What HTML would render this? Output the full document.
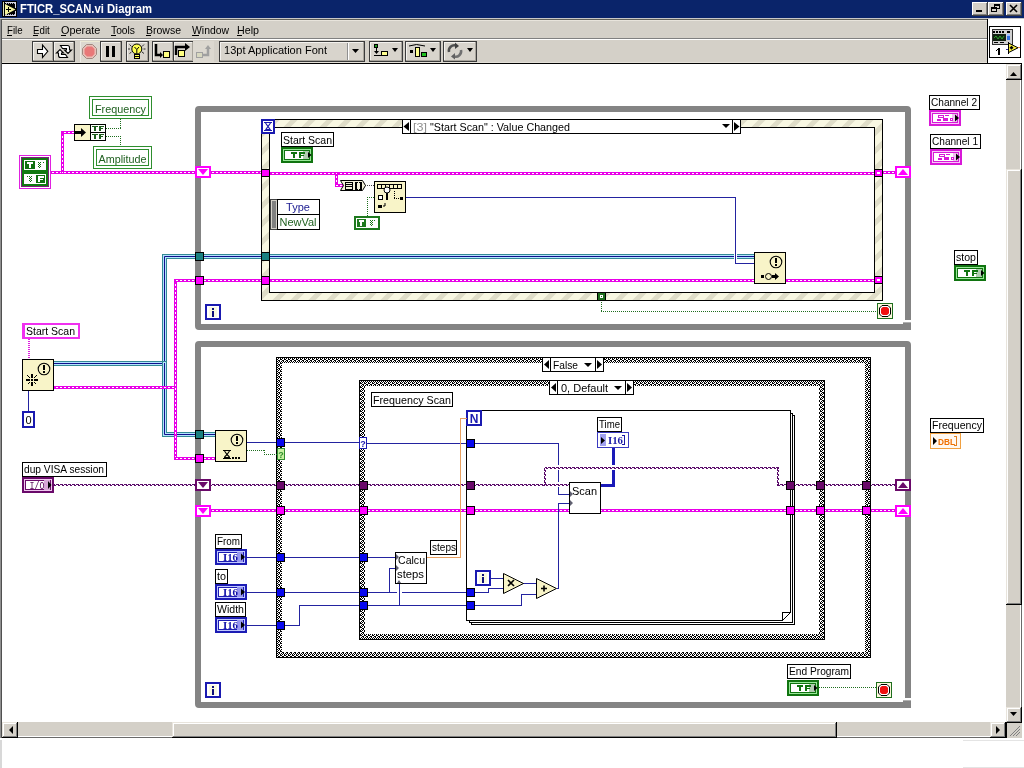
<!DOCTYPE html>
<html><head><meta charset="utf-8"><title>FTICR_SCAN.vi Diagram</title>
<style>html,body{margin:0;padding:0;background:#fff;overflow:hidden}svg{display:block;will-change:transform}rect{shape-rendering:crispEdges}text{white-space:pre}</style>
</head><body>
<svg width="1024" height="768" viewBox="0 0 1024 768" font-family="Liberation Sans, sans-serif">
<defs>
<pattern id="dashH" patternUnits="userSpaceOnUse" width="4" height="1"><rect x="0" y="0" width="2" height="1" fill="#fff"/><rect x="2" y="0" width="2" height="1" fill="#e800e8"/></pattern>
<pattern id="dashV" patternUnits="userSpaceOnUse" width="1" height="4"><rect x="0" y="0" width="1" height="2" fill="#fff"/><rect x="0" y="2" width="1" height="2" fill="#e800e8"/></pattern>
<pattern id="waveHt" patternUnits="userSpaceOnUse" width="4" height="1"><rect x="0" y="0" width="3" height="1" fill="#5a0a6a"/></pattern>
<pattern id="waveHb" patternUnits="userSpaceOnUse" width="4" height="1"><rect x="2" y="0" width="2" height="1" fill="#5a0a6a"/></pattern>
<pattern id="waveVt" patternUnits="userSpaceOnUse" width="1" height="4"><rect x="0" y="0" width="1" height="3" fill="#5a0a6a"/></pattern>
<pattern id="waveVb" patternUnits="userSpaceOnUse" width="1" height="4"><rect x="0" y="2" width="1" height="2" fill="#5a0a6a"/></pattern>
<pattern id="ckg" patternUnits="userSpaceOnUse" x="0" y="2" width="4" height="4"><rect width="4" height="4" fill="#fff"/><rect x="0" y="0" width="1" height="1" fill="#000"/><rect x="2" y="0" width="1" height="1" fill="#000"/><rect x="0" y="1" width="1" height="1" fill="#000"/><rect x="1" y="1" width="1" height="1" fill="#000"/><rect x="2" y="2" width="1" height="1" fill="#000"/><rect x="3" y="2" width="1" height="1" fill="#000"/><rect x="1" y="3" width="1" height="1" fill="#000"/><rect x="3" y="3" width="1" height="1" fill="#000"/></pattern>
<pattern id="stripes" patternUnits="userSpaceOnUse" width="18" height="18"><rect width="18" height="18" fill="#f8f7e2"/><path d="M-4.5 22.5 L22.5 -4.5 M-13.5 13.5 L13.5 -13.5 M4.5 31.5 L31.5 4.5" stroke="#dfddc8" stroke-width="5"/></pattern>
</defs>
<rect x="0" y="0" width="1024" height="768" fill="#ffffff" /><rect x="0" y="18" width="1024" height="46" fill="#d4d0c8" /><rect x="0" y="0" width="1024" height="18" fill="#0a246a" /><rect x="2" y="1" width="15" height="16" fill="#000" /><rect x="3" y="2" width="1" height="14" fill="#d8e0c0" /><rect x="5" y="2" width="11" height="1" fill="#d8d8e8" /><rect x="15" y="2" width="1" height="6" fill="#d8d8e8" /><rect x="15" y="11" width="1" height="5" fill="#d8d8e8" /><rect x="5" y="15" width="11" height="1" fill="#d8d8e8" /><rect x="6" y="3" width="1" height="1" fill="#b0b0c0" /><rect x="6" y="14" width="1" height="1" fill="#b0b0c0" /><rect x="8" y="3" width="1" height="1" fill="#b0b0c0" /><rect x="8" y="14" width="1" height="1" fill="#b0b0c0" /><rect x="10" y="3" width="1" height="1" fill="#b0b0c0" /><rect x="10" y="14" width="1" height="1" fill="#b0b0c0" /><rect x="12" y="3" width="1" height="1" fill="#b0b0c0" /><rect x="12" y="14" width="1" height="1" fill="#b0b0c0" /><rect x="14" y="3" width="1" height="1" fill="#b0b0c0" /><rect x="14" y="14" width="1" height="1" fill="#b0b0c0" /><path d="M5 4 L15.5 9.5 L5 15 Z" fill="#f4f4a0"/><rect x="6" y="9" width="5" height="1" fill="#000" /><rect x="8" y="7" width="1" height="5" fill="#000" /><text x="20" y="13" font-family="Liberation Sans" font-size="12" fill="#fff" font-weight="bold" text-anchor="start" textLength="132" lengthAdjust="spacingAndGlyphs" >FTICR_SCAN.vi Diagram</text><rect x="972" y="2" width="16" height="14" fill="#d4d0c8" /><rect x="972" y="2" width="15" height="1" fill="#fff" /><rect x="972" y="2" width="1" height="13" fill="#fff" /><rect x="972" y="15" width="16" height="1" fill="#404040" /><rect x="987" y="2" width="1" height="14" fill="#404040" /><rect x="973" y="14" width="14" height="1" fill="#808080" /><rect x="986" y="3" width="1" height="12" fill="#808080" /><rect x="976" y="10" width="6" height="2" fill="#000" /><rect x="988" y="2" width="16" height="14" fill="#d4d0c8" /><rect x="988" y="2" width="15" height="1" fill="#fff" /><rect x="988" y="2" width="1" height="13" fill="#fff" /><rect x="988" y="15" width="16" height="1" fill="#404040" /><rect x="1003" y="2" width="1" height="14" fill="#404040" /><rect x="989" y="14" width="14" height="1" fill="#808080" /><rect x="1002" y="3" width="1" height="12" fill="#808080" /><rect x="994" y="4" width="6" height="1" fill="#000" /><rect x="994" y="8" width="6" height="1" fill="#000" /><rect x="994" y="4" width="1" height="5" fill="#000" /><rect x="999" y="4" width="1" height="5" fill="#000" /><rect x="994" y="5" width="6" height="1" fill="#000" /><rect x="991" y="7" width="6" height="5" fill="#d4d0c8" /><rect x="991" y="7" width="6" height="1" fill="#000" /><rect x="991" y="11" width="6" height="1" fill="#000" /><rect x="991" y="7" width="1" height="5" fill="#000" /><rect x="996" y="7" width="1" height="5" fill="#000" /><rect x="991" y="8" width="6" height="1" fill="#000" /><rect x="1006" y="2" width="16" height="14" fill="#d4d0c8" /><rect x="1006" y="2" width="15" height="1" fill="#fff" /><rect x="1006" y="2" width="1" height="13" fill="#fff" /><rect x="1006" y="15" width="16" height="1" fill="#404040" /><rect x="1021" y="2" width="1" height="14" fill="#404040" /><rect x="1007" y="14" width="14" height="1" fill="#808080" /><rect x="1020" y="3" width="1" height="12" fill="#808080" /><path d="M1010 5 L1017 12 M1017 5 L1010 12" stroke="#000" stroke-width="1.6"/><rect x="0" y="18" width="1" height="722" fill="#909090" /><rect x="1" y="19" width="1" height="719" fill="#505050" /><rect x="0" y="18" width="1024" height="1" fill="#c8c8c8" /><rect x="1" y="19" width="1023" height="1" fill="#606058" /><rect x="2" y="20" width="985" height="1" fill="#e8e4dc" /><text x="7" y="34" font-family="Liberation Sans" font-size="11" fill="#000" font-weight="normal" text-anchor="start" textLength="15.6" lengthAdjust="spacingAndGlyphs" >File</text><rect x="7" y="35" width="5" height="1" fill="#000" /><text x="33" y="34" font-family="Liberation Sans" font-size="11" fill="#000" font-weight="normal" text-anchor="start" textLength="16.8" lengthAdjust="spacingAndGlyphs" >Edit</text><rect x="33" y="35" width="5" height="1" fill="#000" /><text x="61" y="34" font-family="Liberation Sans" font-size="11" fill="#000" font-weight="normal" text-anchor="start" textLength="39.4" lengthAdjust="spacingAndGlyphs" >Operate</text><rect x="61" y="35" width="5" height="1" fill="#000" /><text x="111" y="34" font-family="Liberation Sans" font-size="11" fill="#000" font-weight="normal" text-anchor="start" textLength="24" lengthAdjust="spacingAndGlyphs" >Tools</text><rect x="111" y="35" width="5" height="1" fill="#000" /><text x="146" y="34" font-family="Liberation Sans" font-size="11" fill="#000" font-weight="normal" text-anchor="start" textLength="35" lengthAdjust="spacingAndGlyphs" >Browse</text><rect x="146" y="35" width="5" height="1" fill="#000" /><text x="192" y="34" font-family="Liberation Sans" font-size="11" fill="#000" font-weight="normal" text-anchor="start" textLength="37" lengthAdjust="spacingAndGlyphs" >Window</text><rect x="192" y="35" width="7" height="1" fill="#000" /><text x="237" y="34" font-family="Liberation Sans" font-size="11" fill="#000" font-weight="normal" text-anchor="start" textLength="22" lengthAdjust="spacingAndGlyphs" >Help</text><rect x="237" y="35" width="5" height="1" fill="#000" /><rect x="2" y="38" width="985" height="1" fill="#808080" /><rect x="2" y="39" width="985" height="1" fill="#fff" /><rect x="32" y="41" width="22" height="21" fill="#d8d4cc" /><rect x="32" y="41" width="22" height="1" fill="#3c3c3c" /><rect x="32" y="61" width="22" height="1" fill="#3c3c3c" /><rect x="32" y="41" width="1" height="21" fill="#3c3c3c" /><rect x="53" y="41" width="1" height="21" fill="#3c3c3c" /><rect x="33" y="42" width="20" height="1" fill="#f4f2ee" /><rect x="33" y="42" width="1" height="19" fill="#f4f2ee" /><rect x="33" y="60" width="20" height="1" fill="#a8a49c" /><rect x="52" y="42" width="1" height="19" fill="#a8a49c" /><rect x="53" y="41" width="22" height="21" fill="#d8d4cc" /><rect x="53" y="41" width="22" height="1" fill="#3c3c3c" /><rect x="53" y="61" width="22" height="1" fill="#3c3c3c" /><rect x="53" y="41" width="1" height="21" fill="#3c3c3c" /><rect x="74" y="41" width="1" height="21" fill="#3c3c3c" /><rect x="54" y="42" width="20" height="1" fill="#f4f2ee" /><rect x="54" y="42" width="1" height="19" fill="#f4f2ee" /><rect x="54" y="60" width="20" height="1" fill="#a8a49c" /><rect x="73" y="42" width="1" height="19" fill="#a8a49c" /><rect x="100" y="41" width="22" height="21" fill="#d8d4cc" /><rect x="100" y="41" width="22" height="1" fill="#3c3c3c" /><rect x="100" y="61" width="22" height="1" fill="#3c3c3c" /><rect x="100" y="41" width="1" height="21" fill="#3c3c3c" /><rect x="121" y="41" width="1" height="21" fill="#3c3c3c" /><rect x="101" y="42" width="20" height="1" fill="#f4f2ee" /><rect x="101" y="42" width="1" height="19" fill="#f4f2ee" /><rect x="101" y="60" width="20" height="1" fill="#a8a49c" /><rect x="120" y="42" width="1" height="19" fill="#a8a49c" /><rect x="126" y="41" width="23" height="21" fill="#d8d4cc" /><rect x="126" y="41" width="23" height="1" fill="#3c3c3c" /><rect x="126" y="61" width="23" height="1" fill="#3c3c3c" /><rect x="126" y="41" width="1" height="21" fill="#3c3c3c" /><rect x="148" y="41" width="1" height="21" fill="#3c3c3c" /><rect x="127" y="42" width="21" height="1" fill="#f4f2ee" /><rect x="127" y="42" width="1" height="19" fill="#f4f2ee" /><rect x="127" y="60" width="21" height="1" fill="#a8a49c" /><rect x="147" y="42" width="1" height="19" fill="#a8a49c" /><rect x="152" y="41" width="22" height="21" fill="#d8d4cc" /><rect x="152" y="41" width="22" height="1" fill="#3c3c3c" /><rect x="152" y="61" width="22" height="1" fill="#3c3c3c" /><rect x="152" y="41" width="1" height="21" fill="#3c3c3c" /><rect x="173" y="41" width="1" height="21" fill="#3c3c3c" /><rect x="153" y="42" width="20" height="1" fill="#f4f2ee" /><rect x="153" y="42" width="1" height="19" fill="#f4f2ee" /><rect x="153" y="60" width="20" height="1" fill="#a8a49c" /><rect x="172" y="42" width="1" height="19" fill="#a8a49c" /><rect x="173" y="41" width="21" height="21" fill="#d8d4cc" /><rect x="173" y="41" width="21" height="1" fill="#3c3c3c" /><rect x="173" y="61" width="21" height="1" fill="#3c3c3c" /><rect x="173" y="41" width="1" height="21" fill="#3c3c3c" /><rect x="193" y="41" width="1" height="21" fill="#3c3c3c" /><rect x="174" y="42" width="19" height="1" fill="#f4f2ee" /><rect x="174" y="42" width="1" height="19" fill="#f4f2ee" /><rect x="174" y="60" width="19" height="1" fill="#a8a49c" /><rect x="192" y="42" width="1" height="19" fill="#a8a49c" /><rect x="80" y="41" width="20" height="21" fill="#dcd8d0" /><rect x="80" y="41" width="20" height="1" fill="#ecead4" /><rect x="80" y="41" width="1" height="21" fill="#eceae4" /><rect x="193" y="41" width="21" height="21" fill="#dcd8d0" /><path d="M37.5 49.5 L42.5 49.5 L42.5 45 L47.8 51.3 L42.5 57.5 L42.5 53.5 L37.5 53.5 Z" fill="#fff" stroke="#000" stroke-width="1.1"/><path d="M60.5 45.5 L67.5 45.5 Q69.5 45.5 69.5 47.5 L69.5 50 L71.5 50 L68 53.5 L64.5 50 L66.5 50 L66.5 48.5 L62.5 48.5 Z" fill="#fff" stroke="#000" stroke-width="1.1"/><path d="M67.5 57.5 L60.5 57.5 Q58.5 57.5 58.5 55.5 L58.5 53 L56.5 53 L60 49.5 L63.5 53 L61.5 53 L61.5 54.5 L65.5 54.5 Z" fill="#fff" stroke="#000" stroke-width="1.1"/><path d="M86.5 44.5 L92.5 44.5 L96.5 48.5 L96.5 54.5 L92.5 58.5 L86.5 58.5 L82.5 54.5 L82.5 48.5 Z" fill="#e8c0b8" stroke="#a08880" stroke-width="1"/><path d="M87 46.5 L92 46.5 L94.5 49 L94.5 54 L92 56.5 L87 56.5 L84.5 54 L84.5 49 Z" fill="#e87878"/><rect x="106" y="46" width="3" height="11" fill="#000" /><rect x="112" y="46" width="3" height="11" fill="#000" /><circle cx="136.8" cy="49" r="5" fill="#ffff50" stroke="#000" stroke-width="1"/><path d="M134.5 47 L136.8 49.5 L139 47 M136.8 49.5 L136.8 54" stroke="#000" stroke-width="1" fill="none"/><rect x="134" y="54" width="6" height="5" fill="#000" /><rect x="135" y="55" width="4" height="1" fill="#ffff50" /><rect x="135" y="57" width="4" height="1" fill="#ffff50" /><path d="M129.5 44.5 L131.5 46.5 M144 44.5 L142 46.5 M128 49 L130 49 M145.5 49 L143.5 49 M129.5 53.5 L131.5 52 M144 53.5 L142 52" stroke="#303030" stroke-width="1"/><path d="M156 44 L156 55 L161 55" stroke="#000" stroke-width="2.5" fill="none"/><path d="M160 52 L163 55 L160 58 Z" fill="#000"/><rect x="163" y="51" width="7" height="7" fill="#000" /><rect x="164" y="52" width="5" height="5" fill="#ffff80" /><path d="M176 55 L176 47 L186 47" stroke="#000" stroke-width="2.5" fill="none"/><path d="M185 43 L190 47 L185 51 Z" fill="#000"/><rect x="178" y="50" width="7" height="7" fill="#000" /><rect x="179" y="51" width="5" height="5" fill="#ffff80" /><rect x="196" y="52" width="7" height="6" fill="#a0a0a0" /><rect x="197" y="53" width="5" height="4" fill="#d8d8c0" /><path d="M203 55 L208 55 L208 48" stroke="#a0a0a0" stroke-width="2.5" fill="none"/><path d="M205 49 L208 45 L211 49 Z" fill="#a0a0a0"/><rect x="219" y="41" width="146" height="21" fill="#d8d4cc" /><rect x="219" y="41" width="146" height="1" fill="#3c3c3c" /><rect x="219" y="61" width="146" height="1" fill="#3c3c3c" /><rect x="219" y="41" width="1" height="21" fill="#3c3c3c" /><rect x="364" y="41" width="1" height="21" fill="#3c3c3c" /><rect x="220" y="42" width="144" height="1" fill="#f4f2ee" /><rect x="220" y="42" width="1" height="19" fill="#f4f2ee" /><rect x="220" y="60" width="144" height="1" fill="#a8a49c" /><rect x="363" y="42" width="1" height="19" fill="#a8a49c" /><rect x="347" y="43" width="1" height="17" fill="#909090" /><rect x="348" y="43" width="1" height="17" fill="#fff" /><text x="224" y="54" font-family="Liberation Sans" font-size="11" fill="#000" font-weight="normal" text-anchor="start" textLength="103" lengthAdjust="spacingAndGlyphs" >13pt Application Font</text><path d="M352 49 L359 49 L355.5 53 Z" fill="#000"/><rect x="369" y="41" width="34" height="21" fill="#d8d4cc" /><rect x="369" y="41" width="34" height="1" fill="#3c3c3c" /><rect x="369" y="61" width="34" height="1" fill="#3c3c3c" /><rect x="369" y="41" width="1" height="21" fill="#3c3c3c" /><rect x="402" y="41" width="1" height="21" fill="#3c3c3c" /><rect x="370" y="42" width="32" height="1" fill="#f4f2ee" /><rect x="370" y="42" width="1" height="19" fill="#f4f2ee" /><rect x="370" y="60" width="32" height="1" fill="#a8a49c" /><rect x="401" y="42" width="1" height="19" fill="#a8a49c" /><rect x="405" y="41" width="36" height="21" fill="#d8d4cc" /><rect x="405" y="41" width="36" height="1" fill="#3c3c3c" /><rect x="405" y="61" width="36" height="1" fill="#3c3c3c" /><rect x="405" y="41" width="1" height="21" fill="#3c3c3c" /><rect x="440" y="41" width="1" height="21" fill="#3c3c3c" /><rect x="406" y="42" width="34" height="1" fill="#f4f2ee" /><rect x="406" y="42" width="1" height="19" fill="#f4f2ee" /><rect x="406" y="60" width="34" height="1" fill="#a8a49c" /><rect x="439" y="42" width="1" height="19" fill="#a8a49c" /><rect x="443" y="41" width="34" height="21" fill="#d8d4cc" /><rect x="443" y="41" width="34" height="1" fill="#3c3c3c" /><rect x="443" y="61" width="34" height="1" fill="#3c3c3c" /><rect x="443" y="41" width="1" height="21" fill="#3c3c3c" /><rect x="476" y="41" width="1" height="21" fill="#3c3c3c" /><rect x="444" y="42" width="32" height="1" fill="#f4f2ee" /><rect x="444" y="42" width="1" height="19" fill="#f4f2ee" /><rect x="444" y="60" width="32" height="1" fill="#a8a49c" /><rect x="475" y="42" width="1" height="19" fill="#a8a49c" /><rect x="374" y="44" width="4" height="4" fill="#000" /><rect x="375" y="45" width="2" height="2" fill="#20a020" /><rect x="376" y="48" width="1" height="5" fill="#000" /><path d="M374 51 L376.5 54 L379 51 Z" fill="#000"/><rect x="374" y="55" width="14" height="1" fill="#000" /><rect x="381" y="51" width="7" height="5" fill="#000" /><rect x="382" y="52" width="5" height="3" fill="#ffff90" /><path d="M392 48 L398 48 L395 52 Z" fill="#000"/><path d="M409 46 Q416 43 425 46" stroke="#000" fill="none" stroke-width="1"/><rect x="410" y="50" width="3" height="3" fill="#000" /><rect x="415" y="47" width="5" height="10" fill="#000" /><rect x="416" y="48" width="3" height="8" fill="#ffff90" /><rect x="421" y="52" width="6" height="5" fill="#000" /><rect x="422" y="53" width="4" height="3" fill="#20c020" /><path d="M430 48 L436 48 L433 52 Z" fill="#000"/><path d="M449 52 A5.5 5.5 0 0 1 456 45.5" stroke="#505050" stroke-width="2.5" fill="none"/><path d="M455 42.5 L459 46 L455 49 Z" fill="#404040"/><path d="M461 50 A5.5 5.5 0 0 1 454 56.5" stroke="#707070" stroke-width="2.5" fill="none"/><path d="M455 53 L451 56.5 L455 59.5 Z" fill="#606060"/><path d="M467 48 L473 48 L470 52 Z" fill="#000"/><rect x="987" y="19" width="37" height="45" fill="#fff" /><rect x="987" y="19" width="1" height="45" fill="#000" /><rect x="989" y="26" width="32" height="1" fill="#000" /><rect x="989" y="57" width="32" height="1" fill="#000" /><rect x="989" y="26" width="1" height="32" fill="#000" /><rect x="1020" y="26" width="1" height="32" fill="#000" /><rect x="992" y="29" width="21" height="16" fill="#d0d0d0" /><rect x="992" y="29" width="21" height="1" fill="#303030" /><rect x="992" y="44" width="21" height="1" fill="#303030" /><rect x="992" y="29" width="1" height="16" fill="#303030" /><rect x="1012" y="29" width="1" height="16" fill="#303030" /><rect x="993" y="31" width="2" height="2" fill="#000" /><rect x="996" y="31" width="2" height="2" fill="#000" /><rect x="999" y="31" width="2" height="2" fill="#000" /><rect x="1002" y="31" width="2" height="2" fill="#000" /><rect x="1007" y="31" width="3" height="2" fill="#000" /><rect x="993" y="34" width="13" height="7" fill="#102010" /><path d="M994 38 L996 36 L998 39 L1000 36 L1002 39 L1004 36" stroke="#30c030" fill="none" stroke-width="0.8"/><rect x="1007" y="34" width="3" height="2" fill="#a0c0ff" /><rect x="1007" y="36" width="3" height="4" fill="#3070e0" /><rect x="994" y="42" width="4" height="1" fill="#000" /><rect x="1000" y="42" width="4" height="1" fill="#000" /><path d="M1008.5 43 L1018 47.8 L1008.5 52.6 Z" fill="#f8f040" stroke="#000" stroke-width="1"/><rect x="1008" y="42" width="1" height="12" fill="#000" /><rect x="1006" y="49" width="2" height="1" fill="#3030a0" /><rect x="1018" y="47" width="2" height="1" fill="#e08040" /><path d="M1011.5 45.8 L1013.5 47.8 L1011.5 49.8 L1009.5 47.8 Z" fill="#000"/><rect x="998" y="48" width="2" height="7" fill="#000" /><rect x="997" y="49" width="1" height="1" fill="#000" /><rect x="996" y="50" width="1" height="1" fill="#000" /><rect x="2" y="62" width="985" height="1" fill="#e4e0d8" /><rect x="2" y="63" width="1020" height="1" fill="#000" /><rect x="1006" y="64" width="14" height="659" fill="#d4d0c8" /><rect x="1020" y="64" width="1" height="659" fill="#fff" /><rect x="1021" y="64" width="1" height="674" fill="#6a6a6a" /><rect x="1022" y="64" width="2" height="674" fill="#fff" /><rect x="1006" y="64" width="16" height="16" fill="#d4d0c8" /><rect x="1006" y="64" width="15" height="1" fill="#e8e4dc" /><rect x="1006" y="64" width="1" height="15" fill="#e8e4dc" /><rect x="1007" y="65" width="13" height="1" fill="#fff" /><rect x="1007" y="65" width="1" height="13" fill="#fff" /><rect x="1006" y="79" width="16" height="1" fill="#000" /><rect x="1021" y="64" width="1" height="16" fill="#000" /><rect x="1007" y="78" width="14" height="1" fill="#808080" /><rect x="1020" y="65" width="1" height="14" fill="#808080" /><path d="M1010 76 L1017 76 L1013.5 72 Z" fill="#000"/><rect x="1006" y="169" width="16" height="436" fill="#d4d0c8" /><rect x="1006" y="169" width="15" height="1" fill="#e8e4dc" /><rect x="1006" y="169" width="1" height="435" fill="#e8e4dc" /><rect x="1007" y="170" width="13" height="1" fill="#fff" /><rect x="1007" y="170" width="1" height="433" fill="#fff" /><rect x="1006" y="604" width="16" height="1" fill="#000" /><rect x="1021" y="169" width="1" height="436" fill="#000" /><rect x="1007" y="603" width="14" height="1" fill="#808080" /><rect x="1020" y="170" width="1" height="434" fill="#808080" /><rect x="1006" y="707" width="16" height="16" fill="#d4d0c8" /><rect x="1006" y="707" width="15" height="1" fill="#e8e4dc" /><rect x="1006" y="707" width="1" height="15" fill="#e8e4dc" /><rect x="1007" y="708" width="13" height="1" fill="#fff" /><rect x="1007" y="708" width="1" height="13" fill="#fff" /><rect x="1006" y="722" width="16" height="1" fill="#000" /><rect x="1021" y="707" width="1" height="16" fill="#000" /><rect x="1007" y="721" width="14" height="1" fill="#808080" /><rect x="1020" y="708" width="1" height="14" fill="#808080" /><path d="M1010 712 L1017 712 L1013.5 716 Z" fill="#000"/><rect x="2" y="722" width="1004" height="14" fill="#d4d0c8" /><rect x="2" y="736" width="1004" height="1" fill="#fff" /><rect x="2" y="737" width="1020" height="1" fill="#6a6a6a" /><rect x="2" y="722" width="16" height="16" fill="#d4d0c8" /><rect x="2" y="722" width="15" height="1" fill="#e8e4dc" /><rect x="2" y="722" width="1" height="15" fill="#e8e4dc" /><rect x="3" y="723" width="13" height="1" fill="#fff" /><rect x="3" y="723" width="1" height="13" fill="#fff" /><rect x="2" y="737" width="16" height="1" fill="#000" /><rect x="17" y="722" width="1" height="16" fill="#000" /><rect x="3" y="736" width="14" height="1" fill="#808080" /><rect x="16" y="723" width="1" height="14" fill="#808080" /><path d="M13 726 L13 734 L9 730 Z" fill="#000"/><rect x="172" y="722" width="665" height="16" fill="#d4d0c8" /><rect x="172" y="722" width="664" height="1" fill="#e8e4dc" /><rect x="172" y="722" width="1" height="15" fill="#e8e4dc" /><rect x="173" y="723" width="662" height="1" fill="#fff" /><rect x="173" y="723" width="1" height="13" fill="#fff" /><rect x="172" y="737" width="665" height="1" fill="#000" /><rect x="836" y="722" width="1" height="16" fill="#000" /><rect x="173" y="736" width="663" height="1" fill="#808080" /><rect x="835" y="723" width="1" height="14" fill="#808080" /><rect x="990" y="722" width="16" height="16" fill="#d4d0c8" /><rect x="990" y="722" width="15" height="1" fill="#e8e4dc" /><rect x="990" y="722" width="1" height="15" fill="#e8e4dc" /><rect x="991" y="723" width="13" height="1" fill="#fff" /><rect x="991" y="723" width="1" height="13" fill="#fff" /><rect x="990" y="737" width="16" height="1" fill="#000" /><rect x="1005" y="722" width="1" height="16" fill="#000" /><rect x="991" y="736" width="14" height="1" fill="#808080" /><rect x="1004" y="723" width="1" height="14" fill="#808080" /><path d="M996 726 L996 734 L1000 730 Z" fill="#000"/><rect x="1006" y="722" width="16" height="16" fill="#d4d0c8" /><rect x="1006" y="722" width="1" height="16" fill="#000" /><rect x="1006" y="722" width="16" height="1" fill="#000" /><path d="M1020 726 L1010 736 M1020 729 L1013 736 M1020 732 L1016 736" stroke="#808080" stroke-width="1"/><rect x="0" y="738" width="1024" height="30" fill="#fff" /><rect x="0" y="740" width="2" height="28" fill="#d8d8d8" /><rect x="963" y="740" width="61" height="1" fill="#e4e4e4" /><rect x="963" y="767" width="61" height="1" fill="#e4e4e4" />
<g>
<path d="M195 326 L195 110 Q195 106 199 106 L907 106 Q911 106 911 110 L911 320 L905 320 L905 112 L201 112 L201 324 L903 324 L903 330 L199 330 Q195 330 195 326 Z" fill="#848484"/><rect x="903" y="322" width="8" height="8" fill="#848484" /><rect x="903" y="322" width="8" height="1" fill="#b0b0b0" /><rect x="261" y="119" width="622" height="182" fill="url(#stripes)" /><rect x="270" y="128" width="604" height="164" fill="#fff" /><rect x="261" y="119" width="622" height="1" fill="#000" /><rect x="261" y="300" width="622" height="1" fill="#000" /><rect x="261" y="119" width="1" height="182" fill="#000" /><rect x="882" y="119" width="1" height="182" fill="#000" /><rect x="269" y="127" width="606" height="1" fill="#000" /><rect x="269" y="292" width="606" height="1" fill="#000" /><rect x="269" y="127" width="1" height="166" fill="#000" /><rect x="874" y="127" width="1" height="166" fill="#000" /><rect x="261" y="119" width="14" height="15" fill="#1a1ab0" /><rect x="263" y="121" width="10" height="11" fill="#fff" /><path d="M264 122.5 L272 122.5 M264 130.5 L272 130.5 M265.5 123 L268 126.5 L270.5 123 M265.5 130 L268 126.5 L270.5 130" stroke="#1a1ab0" stroke-width="1.2" fill="none"/><rect x="266" y="129" width="4" height="1" fill="#1a1ab0" /><rect x="402" y="119" width="339" height="15" fill="#fff" /><rect x="402" y="119" width="339" height="1" fill="#000" /><rect x="402" y="133" width="339" height="1" fill="#000" /><rect x="402" y="119" width="1" height="15" fill="#000" /><rect x="740" y="119" width="1" height="15" fill="#000" /><rect x="410" y="119" width="1" height="15" fill="#000" /><rect x="732" y="119" width="1" height="15" fill="#000" /><path d="M403.5 126.5 L409 122 L409 131 Z" fill="#000"/><path d="M739.5 126.5 L734 122 L734 131 Z" fill="#000"/><path d="M722 124 L730 124 L726 128 Z" fill="#000"/><text x="413" y="131" font-family="Liberation Sans" font-size="11" fill="#909090" font-weight="normal" text-anchor="start" textLength="14" lengthAdjust="spacingAndGlyphs" >[3]</text><text x="430" y="131" font-family="Liberation Sans" font-size="11" fill="#000" font-weight="normal" text-anchor="start" textLength="140" lengthAdjust="spacingAndGlyphs" >"Start Scan" : Value Changed</text><rect x="281" y="132" width="53" height="15" fill="#fff" /><rect x="281" y="132" width="53" height="1" fill="#000" /><rect x="281" y="146" width="53" height="1" fill="#000" /><rect x="281" y="132" width="1" height="15" fill="#000" /><rect x="333" y="132" width="1" height="15" fill="#000" /><text x="283" y="144" font-family="Liberation Sans" font-size="11" fill="#000" font-weight="normal" text-anchor="start" textLength="49" lengthAdjust="spacingAndGlyphs" >Start Scan</text><rect x="281" y="147" width="32" height="16" fill="#107410" /><rect x="283" y="149" width="28" height="12" fill="#98e898" /><rect x="284" y="150" width="26" height="10" fill="#107410" /><rect x="285" y="151" width="24" height="8" fill="#fff" /><rect x="303" y="151" width="6" height="8" fill="#b0ccb0" /><rect x="291" y="152" width="6" height="2" fill="#107410" /><rect x="293" y="154" width="2" height="4" fill="#107410" /><rect x="299" y="152" width="2" height="6" fill="#107410" /><rect x="301" y="152" width="4" height="2" fill="#107410" /><rect x="301" y="155" width="3" height="1" fill="#107410" /><path d="M308 152 L311.5 155 L308 158 Z" fill="#000"/><rect x="270" y="199" width="8" height="31" fill="#d4d0c8" /><rect x="270" y="199" width="8" height="1" fill="#404040" /><rect x="270" y="229" width="8" height="1" fill="#404040" /><rect x="270" y="199" width="1" height="31" fill="#404040" /><rect x="277" y="199" width="1" height="31" fill="#404040" /><rect x="272" y="201" width="4" height="27" fill="#808080" /><rect x="277" y="199" width="43" height="31" fill="#fff" /><rect x="277" y="199" width="43" height="1" fill="#000" /><rect x="277" y="229" width="43" height="1" fill="#000" /><rect x="277" y="199" width="1" height="31" fill="#000" /><rect x="319" y="199" width="1" height="31" fill="#000" /><rect x="277" y="214" width="43" height="1" fill="#000" /><text x="298" y="211" font-family="Liberation Sans" font-size="11" fill="#1a1a90" font-weight="normal" text-anchor="middle" >Type</text><text x="298" y="226" font-family="Liberation Sans" font-size="11" fill="#206020" font-weight="normal" text-anchor="middle" >NewVal</text><path d="M195 704 L195 345 Q195 341 199 341 L907 341 Q911 341 911 345 L911 698 L905 698 L905 347 L201 347 L201 702 L903 702 L903 708 L199 708 Q195 708 195 704 Z" fill="#848484"/><rect x="903" y="700" width="8" height="8" fill="#848484" /><rect x="903" y="700" width="8" height="1" fill="#b0b0b0" /><rect x="276" y="357" width="595" height="301" fill="url(#ckg)" /><rect x="282" y="363" width="583" height="289" fill="#fff" /><rect x="276" y="357" width="595" height="1" fill="#000" /><rect x="276" y="657" width="595" height="1" fill="#000" /><rect x="276" y="357" width="1" height="301" fill="#000" /><rect x="870" y="357" width="1" height="301" fill="#000" /><rect x="359" y="380" width="466" height="260" fill="url(#ckg)" /><rect x="365" y="386" width="454" height="248" fill="#fff" /><rect x="359" y="380" width="466" height="1" fill="#000" /><rect x="359" y="639" width="466" height="1" fill="#000" /><rect x="359" y="380" width="1" height="260" fill="#000" /><rect x="824" y="380" width="1" height="260" fill="#000" /><rect x="466" y="410" width="329" height="215" fill="#fff" /><rect x="471" y="415" width="324" height="1" fill="#000" /><rect x="471" y="624" width="324" height="1" fill="#000" /><rect x="471" y="415" width="1" height="210" fill="#000" /><rect x="794" y="415" width="1" height="210" fill="#000" /><rect x="472" y="416" width="322" height="208" fill="#fff" /><rect x="469" y="413" width="324" height="1" fill="#000" /><rect x="469" y="622" width="324" height="1" fill="#000" /><rect x="469" y="413" width="1" height="210" fill="#000" /><rect x="792" y="413" width="1" height="210" fill="#000" /><rect x="470" y="414" width="322" height="208" fill="#fff" /><rect x="466" y="410" width="325" height="1" fill="#000" /><rect x="466" y="620" width="325" height="1" fill="#000" /><rect x="466" y="410" width="1" height="211" fill="#000" /><rect x="790" y="410" width="1" height="211" fill="#000" /><rect x="467" y="411" width="323" height="209" fill="#fff" /><path d="M783 621 L791 621 L791 613 Z" fill="#fff"/><rect x="790" y="613" width="1" height="8" fill="#fff" /><rect x="783" y="620" width="8" height="1" fill="#fff" /><path d="M782.5 620.5 L782.5 612.5 L790.5 612.5 M782.5 620.5 L790.5 612.5" stroke="#000" stroke-width="1" fill="none" shape-rendering="crispEdges"/><rect x="542" y="357" width="62" height="15" fill="#fff" /><rect x="542" y="357" width="62" height="1" fill="#000" /><rect x="542" y="371" width="62" height="1" fill="#000" /><rect x="542" y="357" width="1" height="15" fill="#000" /><rect x="603" y="357" width="1" height="15" fill="#000" /><rect x="550" y="357" width="1" height="15" fill="#000" /><rect x="595" y="357" width="1" height="15" fill="#000" /><path d="M544 364.5 L549 360 L549 369 Z" fill="#000"/><path d="M602 364.5 L597 360 L597 369 Z" fill="#000"/><path d="M584 363 L592 363 L588 367 Z" fill="#000"/><text x="553" y="369" font-family="Liberation Sans" font-size="11" fill="#000" font-weight="normal" text-anchor="start" textLength="25" lengthAdjust="spacingAndGlyphs" >False</text><rect x="549" y="380" width="85" height="15" fill="#fff" /><rect x="549" y="380" width="85" height="1" fill="#000" /><rect x="549" y="394" width="85" height="1" fill="#000" /><rect x="549" y="380" width="1" height="15" fill="#000" /><rect x="633" y="380" width="1" height="15" fill="#000" /><rect x="557" y="380" width="1" height="15" fill="#000" /><rect x="625" y="380" width="1" height="15" fill="#000" /><path d="M551 387.5 L556 383 L556 392 Z" fill="#000"/><path d="M632 387.5 L627 383 L627 392 Z" fill="#000"/><path d="M614 386 L622 386 L618 390 Z" fill="#000"/><text x="561" y="392" font-family="Liberation Sans" font-size="11" fill="#000" font-weight="normal" text-anchor="start" textLength="47" lengthAdjust="spacingAndGlyphs" >0, Default</text><rect x="371" y="392" width="82" height="15" fill="#fff" /><rect x="371" y="392" width="82" height="1" fill="#000" /><rect x="371" y="406" width="82" height="1" fill="#000" /><rect x="371" y="392" width="1" height="15" fill="#000" /><rect x="452" y="392" width="1" height="15" fill="#000" /><text x="373" y="404" font-family="Liberation Sans" font-size="11" fill="#000" font-weight="normal" text-anchor="start" textLength="78" lengthAdjust="spacingAndGlyphs" >Frequency Scan</text><rect x="466" y="410" width="16" height="16" fill="#1a1ab0" /><rect x="468" y="412" width="12" height="12" fill="#fff" /><text x="474.0" y="423" font-family="Liberation Sans" font-size="12" fill="#1a1ab0" font-weight="bold" text-anchor="middle" >N</text><rect x="475" y="570" width="16" height="16" fill="#1a1ab0" /><rect x="477" y="572" width="12" height="12" fill="#fff" /><rect x="479" y="573" width="8" height="10" fill="#fafae0" /><rect x="482" y="574" width="2" height="2" fill="#10107a" /><rect x="482" y="577" width="2" height="6" fill="#10107a" /><rect x="205" y="304" width="16" height="16" fill="#1a1ab0" /><rect x="207" y="306" width="12" height="12" fill="#fff" /><rect x="209" y="307" width="8" height="10" fill="#fafae0" /><rect x="212" y="308" width="2" height="2" fill="#10107a" /><rect x="212" y="311" width="2" height="6" fill="#10107a" /><rect x="205" y="682" width="16" height="16" fill="#1a1ab0" /><rect x="207" y="684" width="12" height="12" fill="#fff" /><rect x="209" y="685" width="8" height="10" fill="#fafae0" /><rect x="212" y="686" width="2" height="2" fill="#10107a" /><rect x="212" y="689" width="2" height="6" fill="#10107a" /><rect x="50" y="171" width="213" height="3" fill="#e800e8" /><rect x="51" y="172" width="211" height="1" fill="url(#dashH)" /><rect x="269" y="172" width="607" height="3" fill="#e800e8" /><rect x="270" y="173" width="605" height="1" fill="url(#dashH)" /><rect x="882" y="171" width="15" height="3" fill="#e800e8" /><rect x="883" y="172" width="13" height="1" fill="url(#dashH)" /><rect x="61" y="131" width="3" height="43" fill="#e800e8" /><rect x="62" y="132" width="1" height="41" fill="url(#dashV)" /><rect x="61" y="131" width="15" height="3" fill="#e800e8" /><rect x="62" y="132" width="13" height="1" fill="url(#dashH)" /><rect x="335" y="172" width="3" height="15" fill="#e800e8" /><rect x="336" y="173" width="1" height="13" fill="url(#dashV)" /><rect x="335" y="184" width="8" height="3" fill="#e800e8" /><rect x="336" y="185" width="6" height="1" fill="url(#dashH)" /><rect x="106" y="128" width="1" height="1" fill="#1e6e1e" /><rect x="108" y="128" width="1" height="1" fill="#1e6e1e" /><rect x="110" y="128" width="1" height="1" fill="#1e6e1e" /><rect x="112" y="128" width="1" height="1" fill="#1e6e1e" /><rect x="114" y="128" width="1" height="1" fill="#1e6e1e" /><rect x="116" y="128" width="1" height="1" fill="#1e6e1e" /><rect x="118" y="128" width="1" height="1" fill="#1e6e1e" /><rect x="120" y="128" width="1" height="1" fill="#1e6e1e" /><rect x="120" y="119" width="1" height="1" fill="#1e6e1e" /><rect x="120" y="121" width="1" height="1" fill="#1e6e1e" /><rect x="120" y="123" width="1" height="1" fill="#1e6e1e" /><rect x="120" y="125" width="1" height="1" fill="#1e6e1e" /><rect x="120" y="127" width="1" height="1" fill="#1e6e1e" /><rect x="106" y="136" width="1" height="1" fill="#1e6e1e" /><rect x="108" y="136" width="1" height="1" fill="#1e6e1e" /><rect x="110" y="136" width="1" height="1" fill="#1e6e1e" /><rect x="112" y="136" width="1" height="1" fill="#1e6e1e" /><rect x="114" y="136" width="1" height="1" fill="#1e6e1e" /><rect x="116" y="136" width="1" height="1" fill="#1e6e1e" /><rect x="118" y="136" width="1" height="1" fill="#1e6e1e" /><rect x="120" y="136" width="1" height="1" fill="#1e6e1e" /><rect x="120" y="136" width="1" height="1" fill="#1e6e1e" /><rect x="120" y="138" width="1" height="1" fill="#1e6e1e" /><rect x="120" y="140" width="1" height="1" fill="#1e6e1e" /><rect x="120" y="142" width="1" height="1" fill="#1e6e1e" /><rect x="120" y="144" width="1" height="1" fill="#1e6e1e" /><rect x="120" y="146" width="1" height="1" fill="#1e6e1e" /><rect x="28" y="339" width="1" height="1" fill="#e020e0" /><rect x="28" y="341" width="1" height="1" fill="#e020e0" /><rect x="28" y="343" width="1" height="1" fill="#e020e0" /><rect x="28" y="345" width="1" height="1" fill="#e020e0" /><rect x="28" y="347" width="1" height="1" fill="#e020e0" /><rect x="28" y="349" width="1" height="1" fill="#e020e0" /><rect x="28" y="351" width="1" height="1" fill="#e020e0" /><rect x="28" y="353" width="1" height="1" fill="#e020e0" /><rect x="28" y="355" width="1" height="1" fill="#e020e0" /><rect x="28" y="357" width="1" height="1" fill="#e020e0" /><rect x="28" y="359" width="1" height="1" fill="#e020e0" /><rect x="29" y="339" width="1" height="1" fill="#e020e0" /><rect x="29" y="341" width="1" height="1" fill="#e020e0" /><rect x="29" y="343" width="1" height="1" fill="#e020e0" /><rect x="29" y="345" width="1" height="1" fill="#e020e0" /><rect x="29" y="347" width="1" height="1" fill="#e020e0" /><rect x="29" y="349" width="1" height="1" fill="#e020e0" /><rect x="29" y="351" width="1" height="1" fill="#e020e0" /><rect x="29" y="353" width="1" height="1" fill="#e020e0" /><rect x="29" y="355" width="1" height="1" fill="#e020e0" /><rect x="29" y="357" width="1" height="1" fill="#e020e0" /><rect x="29" y="359" width="1" height="1" fill="#e020e0" /><rect x="28" y="391" width="1" height="21" fill="#2323a0" /><path d="M54.5 363.5 L164.5 363.5 L164.5 256.5 L754.5 256.5" stroke="#338a94" stroke-width="5" fill="none" stroke-linecap="square"/><path d="M54.5 363.5 L164.5 363.5 L164.5 256.5 L754.5 256.5" stroke="#b4e4ff" stroke-width="3" fill="none" stroke-linecap="square"/><path d="M54.5 363.5 L164.5 363.5 L164.5 256.5 L754.5 256.5" stroke="#10108c" stroke-width="1" fill="none" stroke-linecap="square"/><path d="M164.5 363.5 L164.5 434.5 L215.5 434.5" stroke="#338a94" stroke-width="5" fill="none" stroke-linecap="square"/><path d="M164.5 363.5 L164.5 434.5 L215.5 434.5" stroke="#b4e4ff" stroke-width="3" fill="none" stroke-linecap="square"/><path d="M164.5 363.5 L164.5 434.5 L215.5 434.5" stroke="#10108c" stroke-width="1" fill="none" stroke-linecap="square"/><rect x="53" y="386" width="124" height="3" fill="#e800e8" /><rect x="54" y="387" width="122" height="1" fill="url(#dashH)" /><rect x="174" y="279" width="3" height="181" fill="#e800e8" /><rect x="175" y="280" width="1" height="179" fill="url(#dashV)" /><rect x="174" y="457" width="43" height="3" fill="#e800e8" /><rect x="175" y="458" width="41" height="1" fill="url(#dashH)" /><rect x="174" y="279" width="583" height="3" fill="#e800e8" /><rect x="175" y="280" width="581" height="1" fill="url(#dashH)" /><rect x="785" y="279" width="92" height="3" fill="#e800e8" /><rect x="786" y="280" width="90" height="1" fill="url(#dashH)" /><rect x="406" y="197" width="330" height="1" fill="#2323a0" /><rect x="735" y="197" width="1" height="67" fill="#2323a0" /><rect x="735" y="263" width="21" height="1" fill="#2323a0" /><rect x="734" y="253" width="3" height="7" fill="#fff" /><rect x="735" y="197" width="1" height="67" fill="#2323a0" /><rect x="367" y="197" width="1" height="1" fill="#1e6e1e" /><rect x="367" y="199" width="1" height="1" fill="#1e6e1e" /><rect x="367" y="201" width="1" height="1" fill="#1e6e1e" /><rect x="367" y="203" width="1" height="1" fill="#1e6e1e" /><rect x="367" y="205" width="1" height="1" fill="#1e6e1e" /><rect x="367" y="207" width="1" height="1" fill="#1e6e1e" /><rect x="367" y="209" width="1" height="1" fill="#1e6e1e" /><rect x="367" y="211" width="1" height="1" fill="#1e6e1e" /><rect x="367" y="213" width="1" height="1" fill="#1e6e1e" /><rect x="367" y="215" width="1" height="1" fill="#1e6e1e" /><rect x="367" y="197" width="1" height="1" fill="#1e6e1e" /><rect x="369" y="197" width="1" height="1" fill="#1e6e1e" /><rect x="371" y="197" width="1" height="1" fill="#1e6e1e" /><rect x="373" y="197" width="1" height="1" fill="#1e6e1e" /><rect x="375" y="197" width="1" height="1" fill="#1e6e1e" /><rect x="365" y="185" width="1" height="1" fill="#404040" /><rect x="367" y="185" width="1" height="1" fill="#404040" /><rect x="369" y="185" width="1" height="1" fill="#404040" /><rect x="371" y="185" width="1" height="1" fill="#404040" /><rect x="373" y="185" width="1" height="1" fill="#404040" /><rect x="375" y="185" width="1" height="1" fill="#404040" /><rect x="601" y="302" width="1" height="1" fill="#1e6e1e" /><rect x="601" y="304" width="1" height="1" fill="#1e6e1e" /><rect x="601" y="306" width="1" height="1" fill="#1e6e1e" /><rect x="601" y="308" width="1" height="1" fill="#1e6e1e" /><rect x="601" y="310" width="1" height="1" fill="#1e6e1e" /><rect x="601" y="311" width="1" height="1" fill="#1e6e1e" /><rect x="603" y="311" width="1" height="1" fill="#1e6e1e" /><rect x="605" y="311" width="1" height="1" fill="#1e6e1e" /><rect x="607" y="311" width="1" height="1" fill="#1e6e1e" /><rect x="609" y="311" width="1" height="1" fill="#1e6e1e" /><rect x="611" y="311" width="1" height="1" fill="#1e6e1e" /><rect x="613" y="311" width="1" height="1" fill="#1e6e1e" /><rect x="615" y="311" width="1" height="1" fill="#1e6e1e" /><rect x="617" y="311" width="1" height="1" fill="#1e6e1e" /><rect x="619" y="311" width="1" height="1" fill="#1e6e1e" /><rect x="621" y="311" width="1" height="1" fill="#1e6e1e" /><rect x="623" y="311" width="1" height="1" fill="#1e6e1e" /><rect x="625" y="311" width="1" height="1" fill="#1e6e1e" /><rect x="627" y="311" width="1" height="1" fill="#1e6e1e" /><rect x="629" y="311" width="1" height="1" fill="#1e6e1e" /><rect x="631" y="311" width="1" height="1" fill="#1e6e1e" /><rect x="633" y="311" width="1" height="1" fill="#1e6e1e" /><rect x="635" y="311" width="1" height="1" fill="#1e6e1e" /><rect x="637" y="311" width="1" height="1" fill="#1e6e1e" /><rect x="639" y="311" width="1" height="1" fill="#1e6e1e" /><rect x="641" y="311" width="1" height="1" fill="#1e6e1e" /><rect x="643" y="311" width="1" height="1" fill="#1e6e1e" /><rect x="645" y="311" width="1" height="1" fill="#1e6e1e" /><rect x="647" y="311" width="1" height="1" fill="#1e6e1e" /><rect x="649" y="311" width="1" height="1" fill="#1e6e1e" /><rect x="651" y="311" width="1" height="1" fill="#1e6e1e" /><rect x="653" y="311" width="1" height="1" fill="#1e6e1e" /><rect x="655" y="311" width="1" height="1" fill="#1e6e1e" /><rect x="657" y="311" width="1" height="1" fill="#1e6e1e" /><rect x="659" y="311" width="1" height="1" fill="#1e6e1e" /><rect x="661" y="311" width="1" height="1" fill="#1e6e1e" /><rect x="663" y="311" width="1" height="1" fill="#1e6e1e" /><rect x="665" y="311" width="1" height="1" fill="#1e6e1e" /><rect x="667" y="311" width="1" height="1" fill="#1e6e1e" /><rect x="669" y="311" width="1" height="1" fill="#1e6e1e" /><rect x="671" y="311" width="1" height="1" fill="#1e6e1e" /><rect x="673" y="311" width="1" height="1" fill="#1e6e1e" /><rect x="675" y="311" width="1" height="1" fill="#1e6e1e" /><rect x="677" y="311" width="1" height="1" fill="#1e6e1e" /><rect x="679" y="311" width="1" height="1" fill="#1e6e1e" /><rect x="681" y="311" width="1" height="1" fill="#1e6e1e" /><rect x="683" y="311" width="1" height="1" fill="#1e6e1e" /><rect x="685" y="311" width="1" height="1" fill="#1e6e1e" /><rect x="687" y="311" width="1" height="1" fill="#1e6e1e" /><rect x="689" y="311" width="1" height="1" fill="#1e6e1e" /><rect x="691" y="311" width="1" height="1" fill="#1e6e1e" /><rect x="693" y="311" width="1" height="1" fill="#1e6e1e" /><rect x="695" y="311" width="1" height="1" fill="#1e6e1e" /><rect x="697" y="311" width="1" height="1" fill="#1e6e1e" /><rect x="699" y="311" width="1" height="1" fill="#1e6e1e" /><rect x="701" y="311" width="1" height="1" fill="#1e6e1e" /><rect x="703" y="311" width="1" height="1" fill="#1e6e1e" /><rect x="705" y="311" width="1" height="1" fill="#1e6e1e" /><rect x="707" y="311" width="1" height="1" fill="#1e6e1e" /><rect x="709" y="311" width="1" height="1" fill="#1e6e1e" /><rect x="711" y="311" width="1" height="1" fill="#1e6e1e" /><rect x="713" y="311" width="1" height="1" fill="#1e6e1e" /><rect x="715" y="311" width="1" height="1" fill="#1e6e1e" /><rect x="717" y="311" width="1" height="1" fill="#1e6e1e" /><rect x="719" y="311" width="1" height="1" fill="#1e6e1e" /><rect x="721" y="311" width="1" height="1" fill="#1e6e1e" /><rect x="723" y="311" width="1" height="1" fill="#1e6e1e" /><rect x="725" y="311" width="1" height="1" fill="#1e6e1e" /><rect x="727" y="311" width="1" height="1" fill="#1e6e1e" /><rect x="729" y="311" width="1" height="1" fill="#1e6e1e" /><rect x="731" y="311" width="1" height="1" fill="#1e6e1e" /><rect x="733" y="311" width="1" height="1" fill="#1e6e1e" /><rect x="735" y="311" width="1" height="1" fill="#1e6e1e" /><rect x="737" y="311" width="1" height="1" fill="#1e6e1e" /><rect x="739" y="311" width="1" height="1" fill="#1e6e1e" /><rect x="741" y="311" width="1" height="1" fill="#1e6e1e" /><rect x="743" y="311" width="1" height="1" fill="#1e6e1e" /><rect x="745" y="311" width="1" height="1" fill="#1e6e1e" /><rect x="747" y="311" width="1" height="1" fill="#1e6e1e" /><rect x="749" y="311" width="1" height="1" fill="#1e6e1e" /><rect x="751" y="311" width="1" height="1" fill="#1e6e1e" /><rect x="753" y="311" width="1" height="1" fill="#1e6e1e" /><rect x="755" y="311" width="1" height="1" fill="#1e6e1e" /><rect x="757" y="311" width="1" height="1" fill="#1e6e1e" /><rect x="759" y="311" width="1" height="1" fill="#1e6e1e" /><rect x="761" y="311" width="1" height="1" fill="#1e6e1e" /><rect x="763" y="311" width="1" height="1" fill="#1e6e1e" /><rect x="765" y="311" width="1" height="1" fill="#1e6e1e" /><rect x="767" y="311" width="1" height="1" fill="#1e6e1e" /><rect x="769" y="311" width="1" height="1" fill="#1e6e1e" /><rect x="771" y="311" width="1" height="1" fill="#1e6e1e" /><rect x="773" y="311" width="1" height="1" fill="#1e6e1e" /><rect x="775" y="311" width="1" height="1" fill="#1e6e1e" /><rect x="777" y="311" width="1" height="1" fill="#1e6e1e" /><rect x="779" y="311" width="1" height="1" fill="#1e6e1e" /><rect x="781" y="311" width="1" height="1" fill="#1e6e1e" /><rect x="783" y="311" width="1" height="1" fill="#1e6e1e" /><rect x="785" y="311" width="1" height="1" fill="#1e6e1e" /><rect x="787" y="311" width="1" height="1" fill="#1e6e1e" /><rect x="789" y="311" width="1" height="1" fill="#1e6e1e" /><rect x="791" y="311" width="1" height="1" fill="#1e6e1e" /><rect x="793" y="311" width="1" height="1" fill="#1e6e1e" /><rect x="795" y="311" width="1" height="1" fill="#1e6e1e" /><rect x="797" y="311" width="1" height="1" fill="#1e6e1e" /><rect x="799" y="311" width="1" height="1" fill="#1e6e1e" /><rect x="801" y="311" width="1" height="1" fill="#1e6e1e" /><rect x="803" y="311" width="1" height="1" fill="#1e6e1e" /><rect x="805" y="311" width="1" height="1" fill="#1e6e1e" /><rect x="807" y="311" width="1" height="1" fill="#1e6e1e" /><rect x="809" y="311" width="1" height="1" fill="#1e6e1e" /><rect x="811" y="311" width="1" height="1" fill="#1e6e1e" /><rect x="813" y="311" width="1" height="1" fill="#1e6e1e" /><rect x="815" y="311" width="1" height="1" fill="#1e6e1e" /><rect x="817" y="311" width="1" height="1" fill="#1e6e1e" /><rect x="819" y="311" width="1" height="1" fill="#1e6e1e" /><rect x="821" y="311" width="1" height="1" fill="#1e6e1e" /><rect x="823" y="311" width="1" height="1" fill="#1e6e1e" /><rect x="825" y="311" width="1" height="1" fill="#1e6e1e" /><rect x="827" y="311" width="1" height="1" fill="#1e6e1e" /><rect x="829" y="311" width="1" height="1" fill="#1e6e1e" /><rect x="831" y="311" width="1" height="1" fill="#1e6e1e" /><rect x="833" y="311" width="1" height="1" fill="#1e6e1e" /><rect x="835" y="311" width="1" height="1" fill="#1e6e1e" /><rect x="837" y="311" width="1" height="1" fill="#1e6e1e" /><rect x="839" y="311" width="1" height="1" fill="#1e6e1e" /><rect x="841" y="311" width="1" height="1" fill="#1e6e1e" /><rect x="843" y="311" width="1" height="1" fill="#1e6e1e" /><rect x="845" y="311" width="1" height="1" fill="#1e6e1e" /><rect x="847" y="311" width="1" height="1" fill="#1e6e1e" /><rect x="849" y="311" width="1" height="1" fill="#1e6e1e" /><rect x="851" y="311" width="1" height="1" fill="#1e6e1e" /><rect x="853" y="311" width="1" height="1" fill="#1e6e1e" /><rect x="855" y="311" width="1" height="1" fill="#1e6e1e" /><rect x="857" y="311" width="1" height="1" fill="#1e6e1e" /><rect x="859" y="311" width="1" height="1" fill="#1e6e1e" /><rect x="861" y="311" width="1" height="1" fill="#1e6e1e" /><rect x="863" y="311" width="1" height="1" fill="#1e6e1e" /><rect x="865" y="311" width="1" height="1" fill="#1e6e1e" /><rect x="867" y="311" width="1" height="1" fill="#1e6e1e" /><rect x="869" y="311" width="1" height="1" fill="#1e6e1e" /><rect x="871" y="311" width="1" height="1" fill="#1e6e1e" /><rect x="873" y="311" width="1" height="1" fill="#1e6e1e" /><rect x="875" y="311" width="1" height="1" fill="#1e6e1e" /><rect x="877" y="311" width="1" height="1" fill="#1e6e1e" /><rect x="247" y="442" width="113" height="1" fill="#2323a0" /><rect x="367" y="443" width="192" height="1" fill="#2323a0" /><rect x="558" y="443" width="1" height="52" fill="#2323a0" /><rect x="558" y="494" width="12" height="1" fill="#2323a0" /><rect x="247" y="450" width="1" height="1" fill="#1e6e1e" /><rect x="249" y="450" width="1" height="1" fill="#1e6e1e" /><rect x="251" y="450" width="1" height="1" fill="#1e6e1e" /><rect x="253" y="450" width="1" height="1" fill="#1e6e1e" /><rect x="255" y="450" width="1" height="1" fill="#1e6e1e" /><rect x="257" y="450" width="1" height="1" fill="#1e6e1e" /><rect x="259" y="450" width="1" height="1" fill="#1e6e1e" /><rect x="261" y="450" width="1" height="1" fill="#1e6e1e" /><rect x="263" y="450" width="1" height="1" fill="#1e6e1e" /><rect x="264" y="450" width="1" height="1" fill="#1e6e1e" /><rect x="264" y="452" width="1" height="1" fill="#1e6e1e" /><rect x="264" y="454" width="1" height="1" fill="#1e6e1e" /><rect x="264" y="454" width="1" height="1" fill="#1e6e1e" /><rect x="266" y="454" width="1" height="1" fill="#1e6e1e" /><rect x="268" y="454" width="1" height="1" fill="#1e6e1e" /><rect x="270" y="454" width="1" height="1" fill="#1e6e1e" /><rect x="272" y="454" width="1" height="1" fill="#1e6e1e" /><rect x="274" y="454" width="1" height="1" fill="#1e6e1e" /><rect x="276" y="454" width="1" height="1" fill="#1e6e1e" /><rect x="54" y="484" width="492" height="1" fill="url(#waveHt)" /><rect x="54" y="485" width="492" height="1" fill="url(#waveHb)" /><rect x="545" y="484" width="25" height="1" fill="url(#waveHt)" /><rect x="545" y="485" width="25" height="1" fill="url(#waveHb)" /><rect x="544" y="468" width="1" height="18" fill="url(#waveVt)" /><rect x="545" y="468" width="1" height="18" fill="url(#waveVb)" /><rect x="545" y="467" width="234" height="1" fill="url(#waveHt)" /><rect x="545" y="468" width="234" height="1" fill="url(#waveHb)" /><rect x="777" y="468" width="1" height="18" fill="url(#waveVt)" /><rect x="778" y="468" width="1" height="18" fill="url(#waveVb)" /><rect x="778" y="484" width="118" height="1" fill="url(#waveHt)" /><rect x="778" y="485" width="118" height="1" fill="url(#waveHb)" /><rect x="209" y="509" width="688" height="3" fill="#e800e8" /><rect x="210" y="510" width="686" height="1" fill="url(#dashH)" /><rect x="247" y="557" width="149" height="1" fill="#2323a0" /><rect x="247" y="592" width="220" height="1" fill="#2323a0" /><rect x="389" y="568" width="1" height="25" fill="#2323a0" /><rect x="389" y="568" width="7" height="1" fill="#2323a0" /><rect x="247" y="625" width="53" height="1" fill="#2323a0" /><rect x="299" y="605" width="1" height="21" fill="#2323a0" /><rect x="299" y="605" width="168" height="1" fill="#2323a0" /><rect x="399" y="584" width="1" height="22" fill="#2323a0" /><rect x="475" y="592" width="14" height="1" fill="#2323a0" /><rect x="488" y="588" width="1" height="5" fill="#2323a0" /><rect x="488" y="588" width="16" height="1" fill="#2323a0" /><rect x="475" y="605" width="47" height="1" fill="#2323a0" /><rect x="521" y="594" width="1" height="12" fill="#2323a0" /><rect x="521" y="594" width="16" height="1" fill="#2323a0" /><rect x="491" y="578" width="13" height="1" fill="#2323a0" /><rect x="523" y="583" width="14" height="1" fill="#2323a0" /><rect x="557" y="588" width="2" height="1" fill="#2323a0" /><rect x="558" y="503" width="1" height="86" fill="#2323a0" /><rect x="558" y="503" width="12" height="1" fill="#2323a0" /><path d="M601 485.5 L613.5 485.5 L613.5 447" stroke="#1a1ab8" stroke-width="3" fill="none"/><rect x="427" y="557" width="34" height="1" fill="#e8a060" /><rect x="460" y="418" width="1" height="140" fill="#e8a060" /><rect x="460" y="418" width="7" height="1" fill="#e8a060" /><rect x="819" y="687" width="1" height="1" fill="#1e6e1e" /><rect x="821" y="687" width="1" height="1" fill="#1e6e1e" /><rect x="823" y="687" width="1" height="1" fill="#1e6e1e" /><rect x="825" y="687" width="1" height="1" fill="#1e6e1e" /><rect x="827" y="687" width="1" height="1" fill="#1e6e1e" /><rect x="829" y="687" width="1" height="1" fill="#1e6e1e" /><rect x="831" y="687" width="1" height="1" fill="#1e6e1e" /><rect x="833" y="687" width="1" height="1" fill="#1e6e1e" /><rect x="835" y="687" width="1" height="1" fill="#1e6e1e" /><rect x="837" y="687" width="1" height="1" fill="#1e6e1e" /><rect x="839" y="687" width="1" height="1" fill="#1e6e1e" /><rect x="841" y="687" width="1" height="1" fill="#1e6e1e" /><rect x="843" y="687" width="1" height="1" fill="#1e6e1e" /><rect x="845" y="687" width="1" height="1" fill="#1e6e1e" /><rect x="847" y="687" width="1" height="1" fill="#1e6e1e" /><rect x="849" y="687" width="1" height="1" fill="#1e6e1e" /><rect x="851" y="687" width="1" height="1" fill="#1e6e1e" /><rect x="853" y="687" width="1" height="1" fill="#1e6e1e" /><rect x="855" y="687" width="1" height="1" fill="#1e6e1e" /><rect x="857" y="687" width="1" height="1" fill="#1e6e1e" /><rect x="859" y="687" width="1" height="1" fill="#1e6e1e" /><rect x="861" y="687" width="1" height="1" fill="#1e6e1e" /><rect x="863" y="687" width="1" height="1" fill="#1e6e1e" /><rect x="865" y="687" width="1" height="1" fill="#1e6e1e" /><rect x="867" y="687" width="1" height="1" fill="#1e6e1e" /><rect x="869" y="687" width="1" height="1" fill="#1e6e1e" /><rect x="871" y="687" width="1" height="1" fill="#1e6e1e" /><rect x="873" y="687" width="1" height="1" fill="#1e6e1e" /><rect x="875" y="687" width="1" height="1" fill="#1e6e1e" /><rect x="397" y="592" width="5" height="1" fill="#fff" /><rect x="399" y="584" width="1" height="22" fill="#2323a0" /><rect x="557" y="465" width="3" height="5" fill="#fff" /><rect x="557" y="482" width="3" height="5" fill="#fff" /><rect x="611" y="465" width="5" height="5" fill="#fff" /><rect x="545" y="484" width="25" height="1" fill="url(#waveHt)" /><rect x="545" y="485" width="25" height="1" fill="url(#waveHb)" /><rect x="544" y="468" width="1" height="18" fill="url(#waveVt)" /><rect x="545" y="468" width="1" height="18" fill="url(#waveVb)" /><rect x="545" y="467" width="234" height="1" fill="url(#waveHt)" /><rect x="545" y="468" width="234" height="1" fill="url(#waveHb)" /><rect x="195" y="252" width="9" height="9" fill="#000" /><rect x="196" y="253" width="7" height="7" fill="#1a8080" /><rect x="261" y="252" width="9" height="9" fill="#000" /><rect x="262" y="253" width="7" height="7" fill="#1a8080" /><rect x="195" y="276" width="9" height="9" fill="#000" /><rect x="196" y="277" width="7" height="7" fill="#ff00ff" /><rect x="261" y="276" width="9" height="9" fill="#000" /><rect x="262" y="277" width="7" height="7" fill="#ff00ff" /><rect x="261" y="169" width="9" height="8" fill="#000" /><rect x="262" y="170" width="7" height="6" fill="#ff00ff" /><rect x="874" y="169" width="9" height="8" fill="#000" /><rect x="875" y="170" width="7" height="6" fill="#ff00ff" /><rect x="877" y="172" width="3" height="2" fill="#fff" /><rect x="874" y="276" width="9" height="8" fill="#000" /><rect x="875" y="277" width="7" height="6" fill="#ff00ff" /><rect x="877" y="279" width="3" height="2" fill="#fff" /><rect x="195" y="430" width="9" height="9" fill="#000" /><rect x="196" y="431" width="7" height="7" fill="#1a8080" /><rect x="195" y="454" width="9" height="9" fill="#000" /><rect x="196" y="455" width="7" height="7" fill="#ff00ff" /><rect x="597" y="292" width="9" height="9" fill="#000" /><rect x="598" y="293" width="7" height="7" fill="#1e6e1e" /><rect x="600" y="295" width="3" height="3" fill="#fff" /><rect x="601" y="296" width="1" height="1" fill="#1e6e1e" /><rect x="195" y="166" width="16" height="12" fill="#ff00ff" /><rect x="197" y="168" width="12" height="8" fill="#fff" /><path d="M198 169 L208 169 L203 175 Z" fill="#ff00ff"/><rect x="895" y="166" width="16" height="12" fill="#ff00ff" /><rect x="897" y="168" width="12" height="8" fill="#fff" /><path d="M898 175 L908 175 L903 169 Z" fill="#ff00ff"/><rect x="195" y="479" width="16" height="12" fill="#6a0a6a" /><rect x="197" y="481" width="12" height="8" fill="#fff" /><path d="M198 482 L208 482 L203 488 Z" fill="#6a0a6a"/><rect x="195" y="505" width="16" height="12" fill="#ff00ff" /><rect x="197" y="507" width="12" height="8" fill="#fff" /><path d="M198 508 L208 508 L203 514 Z" fill="#ff00ff"/><rect x="895" y="479" width="16" height="12" fill="#6a0a6a" /><rect x="897" y="481" width="12" height="8" fill="#fff" /><path d="M898 488 L908 488 L903 482 Z" fill="#6a0a6a"/><rect x="895" y="505" width="16" height="12" fill="#ff00ff" /><rect x="897" y="507" width="12" height="8" fill="#fff" /><path d="M898 514 L908 514 L903 508 Z" fill="#ff00ff"/><rect x="276" y="481" width="9" height="9" fill="#000" /><rect x="277" y="482" width="7" height="7" fill="#6a0a6a" /><rect x="276" y="506" width="9" height="9" fill="#000" /><rect x="277" y="507" width="7" height="7" fill="#ff00ff" /><rect x="359" y="481" width="9" height="9" fill="#000" /><rect x="360" y="482" width="7" height="7" fill="#6a0a6a" /><rect x="359" y="506" width="9" height="9" fill="#000" /><rect x="360" y="507" width="7" height="7" fill="#ff00ff" /><rect x="466" y="481" width="9" height="9" fill="#000" /><rect x="467" y="482" width="7" height="7" fill="#6a0a6a" /><rect x="466" y="506" width="9" height="9" fill="#000" /><rect x="467" y="507" width="7" height="7" fill="#ff00ff" /><rect x="786" y="481" width="9" height="9" fill="#000" /><rect x="787" y="482" width="7" height="7" fill="#6a0a6a" /><rect x="786" y="506" width="9" height="9" fill="#000" /><rect x="787" y="507" width="7" height="7" fill="#ff00ff" /><rect x="816" y="481" width="9" height="9" fill="#000" /><rect x="817" y="482" width="7" height="7" fill="#6a0a6a" /><rect x="816" y="506" width="9" height="9" fill="#000" /><rect x="817" y="507" width="7" height="7" fill="#ff00ff" /><rect x="862" y="481" width="9" height="9" fill="#000" /><rect x="863" y="482" width="7" height="7" fill="#6a0a6a" /><rect x="862" y="506" width="9" height="9" fill="#000" /><rect x="863" y="507" width="7" height="7" fill="#ff00ff" /><rect x="276" y="553" width="9" height="9" fill="#000" /><rect x="277" y="554" width="7" height="7" fill="#0808f0" /><rect x="276" y="588" width="9" height="9" fill="#000" /><rect x="277" y="589" width="7" height="7" fill="#0808f0" /><rect x="359" y="553" width="9" height="9" fill="#000" /><rect x="360" y="554" width="7" height="7" fill="#0808f0" /><rect x="359" y="588" width="9" height="9" fill="#000" /><rect x="360" y="589" width="7" height="7" fill="#0808f0" /><rect x="359" y="601" width="9" height="9" fill="#000" /><rect x="360" y="602" width="7" height="7" fill="#0808f0" /><rect x="276" y="621" width="9" height="9" fill="#000" /><rect x="277" y="622" width="7" height="7" fill="#0808f0" /><rect x="466" y="588" width="9" height="9" fill="#000" /><rect x="467" y="589" width="7" height="7" fill="#0808f0" /><rect x="466" y="601" width="9" height="9" fill="#000" /><rect x="467" y="602" width="7" height="7" fill="#0808f0" /><rect x="466" y="439" width="9" height="9" fill="#000" /><rect x="467" y="440" width="7" height="7" fill="#0808f0" /><rect x="276" y="438" width="9" height="9" fill="#000" /><rect x="277" y="439" width="7" height="7" fill="#0808f0" /><rect x="277" y="448" width="8" height="12" fill="#2e8e2e" /><rect x="278" y="449" width="6" height="10" fill="#c8f0a0" /><text x="281" y="458" font-family="Liberation Sans" font-size="9" fill="#2e8e2e" font-weight="bold" text-anchor="middle" >?</text><rect x="359" y="437" width="8" height="12" fill="#1a1ab0" /><rect x="360" y="438" width="6" height="10" fill="#fff" /><text x="363" y="447" font-family="Liberation Sans" font-size="9" fill="#1a1ab0" font-weight="bold" text-anchor="middle" >?</text><rect x="19" y="155" width="32" height="34" fill="#e020e0" /><rect x="20" y="156" width="30" height="32" fill="#fff" /><rect x="21" y="157" width="28" height="30" fill="#7a207a" /><rect x="22" y="158" width="26" height="28" fill="#107a10" /><rect x="24" y="160" width="22" height="10" fill="#fff" /><rect x="24" y="174" width="22" height="10" fill="#fff" /><rect x="25" y="161" width="10" height="8" fill="#107010" /><rect x="27" y="162" width="6" height="2" fill="#fff" /><rect x="29" y="164" width="2" height="4" fill="#fff" /><rect x="36" y="175" width="9" height="8" fill="#107010" /><rect x="38" y="176" width="2" height="6" fill="#fff" /><rect x="40" y="176" width="4" height="2" fill="#fff" /><rect x="40" y="179" width="3" height="1" fill="#fff" /><rect x="38" y="162" width="1" height="1" fill="#107010" /><rect x="40" y="162" width="1" height="1" fill="#107010" /><rect x="39" y="163" width="1" height="1" fill="#107010" /><rect x="38" y="164" width="1" height="1" fill="#107010" /><rect x="40" y="164" width="1" height="1" fill="#107010" /><rect x="39" y="165" width="1" height="1" fill="#107010" /><rect x="38" y="166" width="1" height="1" fill="#107010" /><rect x="39" y="167" width="1" height="1" fill="#107010" /><rect x="40" y="166" width="1" height="1" fill="#107010" /><rect x="43" y="162" width="1" height="1" fill="#107010" /><rect x="29" y="176" width="1" height="1" fill="#107010" /><rect x="31" y="176" width="1" height="1" fill="#107010" /><rect x="30" y="177" width="1" height="1" fill="#107010" /><rect x="29" y="178" width="1" height="1" fill="#107010" /><rect x="31" y="178" width="1" height="1" fill="#107010" /><rect x="30" y="179" width="1" height="1" fill="#107010" /><rect x="29" y="180" width="1" height="1" fill="#107010" /><rect x="30" y="181" width="1" height="1" fill="#107010" /><rect x="31" y="180" width="1" height="1" fill="#107010" /><rect x="27" y="176" width="1" height="1" fill="#107010" /><rect x="74" y="124" width="32" height="17" fill="#000" /><rect x="75" y="125" width="15" height="15" fill="#f8f4c8" /><rect x="75" y="131" width="7" height="3" fill="#000" /><path d="M81 128 L86 132.5 L81 137 Z" fill="#000"/><rect x="91" y="125" width="14" height="7" fill="#fff" /><rect x="91" y="133" width="14" height="7" fill="#fff" /><rect x="92" y="126" width="6" height="1" fill="#1e5e1e" /><rect x="94" y="127" width="2" height="4" fill="#1e5e1e" /><rect x="99" y="126" width="2" height="5" fill="#1e5e1e" /><rect x="101" y="126" width="3" height="1" fill="#1e5e1e" /><rect x="101" y="128" width="2" height="1" fill="#1e5e1e" /><rect x="92" y="134" width="6" height="1" fill="#1e5e1e" /><rect x="94" y="135" width="2" height="4" fill="#1e5e1e" /><rect x="99" y="134" width="2" height="5" fill="#1e5e1e" /><rect x="101" y="134" width="3" height="1" fill="#1e5e1e" /><rect x="101" y="136" width="2" height="1" fill="#1e5e1e" /><rect x="89" y="96" width="63" height="23" fill="#fff" /><rect x="89" y="96" width="63" height="1" fill="#2e8e2e" /><rect x="89" y="118" width="63" height="1" fill="#2e8e2e" /><rect x="89" y="96" width="1" height="23" fill="#2e8e2e" /><rect x="151" y="96" width="1" height="23" fill="#2e8e2e" /><rect x="92" y="99" width="57" height="1" fill="#2e8e2e" /><rect x="92" y="115" width="57" height="1" fill="#2e8e2e" /><rect x="92" y="99" width="1" height="17" fill="#2e8e2e" /><rect x="148" y="99" width="1" height="17" fill="#2e8e2e" /><text x="120.5" y="113" font-family="Liberation Sans" font-size="11" fill="#206020" font-weight="normal" text-anchor="middle" textLength="51" lengthAdjust="spacingAndGlyphs" >Frequency</text><rect x="93" y="146" width="59" height="23" fill="#fff" /><rect x="93" y="146" width="59" height="1" fill="#2e8e2e" /><rect x="93" y="168" width="59" height="1" fill="#2e8e2e" /><rect x="93" y="146" width="1" height="23" fill="#2e8e2e" /><rect x="151" y="146" width="1" height="23" fill="#2e8e2e" /><rect x="96" y="149" width="53" height="1" fill="#2e8e2e" /><rect x="96" y="165" width="53" height="1" fill="#2e8e2e" /><rect x="96" y="149" width="1" height="17" fill="#2e8e2e" /><rect x="148" y="149" width="1" height="17" fill="#2e8e2e" /><text x="122.5" y="163" font-family="Liberation Sans" font-size="11" fill="#206020" font-weight="normal" text-anchor="middle" textLength="48" lengthAdjust="spacingAndGlyphs" >Amplitude</text><path d="M340.5 180.5 L362.5 180.5 L365.5 185.5 L362.5 190.5 L340.5 190.5 L343.5 185.5 Z" fill="#f4f2dc" stroke="#000" stroke-width="1"/><rect x="345" y="182" width="8" height="1" fill="#000" /><rect x="345" y="189" width="8" height="1" fill="#000" /><rect x="345" y="182" width="1" height="8" fill="#000" /><rect x="352" y="182" width="1" height="8" fill="#000" /><rect x="346" y="184" width="6" height="1" fill="#000" /><rect x="346" y="186" width="6" height="1" fill="#000" /><rect x="355" y="182" width="2" height="8" fill="#000" /><rect x="357" y="182" width="1" height="1" fill="#000" /><rect x="357" y="189" width="1" height="1" fill="#000" /><rect x="360" y="182" width="2" height="8" fill="#000" /><rect x="359" y="182" width="1" height="1" fill="#000" /><rect x="359" y="189" width="1" height="1" fill="#000" /><rect x="374" y="181" width="32" height="32" fill="#f8f4c8" /><rect x="374" y="181" width="32" height="1" fill="#000" /><rect x="374" y="212" width="32" height="1" fill="#000" /><rect x="374" y="181" width="1" height="32" fill="#000" /><rect x="405" y="181" width="1" height="32" fill="#000" /><rect x="377" y="184" width="5" height="1" fill="#000" /><rect x="377" y="188" width="5" height="1" fill="#000" /><rect x="377" y="184" width="1" height="5" fill="#000" /><rect x="381" y="184" width="1" height="5" fill="#000" /><rect x="381" y="184" width="5" height="1" fill="#000" /><rect x="381" y="188" width="5" height="1" fill="#000" /><rect x="381" y="184" width="1" height="5" fill="#000" /><rect x="385" y="184" width="1" height="5" fill="#000" /><rect x="385" y="184" width="5" height="1" fill="#000" /><rect x="385" y="188" width="5" height="1" fill="#000" /><rect x="385" y="184" width="1" height="5" fill="#000" /><rect x="389" y="184" width="1" height="5" fill="#000" /><rect x="389" y="184" width="5" height="1" fill="#000" /><rect x="389" y="188" width="5" height="1" fill="#000" /><rect x="389" y="184" width="1" height="5" fill="#000" /><rect x="393" y="184" width="1" height="5" fill="#000" /><rect x="393" y="184" width="5" height="1" fill="#000" /><rect x="393" y="188" width="5" height="1" fill="#000" /><rect x="393" y="184" width="1" height="5" fill="#000" /><rect x="397" y="184" width="1" height="5" fill="#000" /><rect x="397" y="184" width="5" height="1" fill="#000" /><rect x="397" y="188" width="5" height="1" fill="#000" /><rect x="397" y="184" width="1" height="5" fill="#000" /><rect x="401" y="184" width="1" height="5" fill="#000" /><circle cx="387" cy="190" r="3" fill="#fff" stroke="#000"/><rect x="386" y="193" width="2" height="7" fill="#000" /><rect x="378" y="195" width="5" height="5" fill="#000" /><rect x="379" y="196" width="3" height="3" fill="#fff" /><rect x="378" y="205" width="4" height="3" fill="#000" /><path d="M383 206 L385 206 L385 203" stroke="#000" fill="none"/><rect x="394" y="191" width="1" height="1" fill="#000" /><rect x="394" y="193" width="1" height="1" fill="#000" /><rect x="394" y="195" width="1" height="1" fill="#000" /><rect x="394" y="197" width="1" height="1" fill="#000" /><rect x="394" y="198" width="1" height="1" fill="#000" /><rect x="396" y="198" width="1" height="1" fill="#000" /><rect x="398" y="198" width="1" height="1" fill="#000" /><rect x="400" y="198" width="1" height="1" fill="#000" /><rect x="400" y="197" width="3" height="3" fill="#000" /><rect x="354" y="216" width="26" height="14" fill="#1e7a1e" /><rect x="356" y="218" width="22" height="10" fill="#fff" /><rect x="357" y="219" width="9" height="8" fill="#1e7a1e" /><rect x="359" y="220" width="5" height="2" fill="#fff" /><rect x="360" y="222" width="2" height="4" fill="#fff" /><rect x="370" y="220" width="1" height="1" fill="#1e7a1e" /><rect x="372" y="220" width="1" height="1" fill="#1e7a1e" /><rect x="371" y="221" width="1" height="1" fill="#1e7a1e" /><rect x="370" y="222" width="1" height="1" fill="#1e7a1e" /><rect x="372" y="222" width="1" height="1" fill="#1e7a1e" /><rect x="371" y="223" width="1" height="1" fill="#1e7a1e" /><rect x="370" y="224" width="1" height="1" fill="#1e7a1e" /><rect x="371" y="225" width="1" height="1" fill="#1e7a1e" /><rect x="372" y="224" width="1" height="1" fill="#1e7a1e" /><rect x="374" y="220" width="1" height="1" fill="#1e7a1e" /><rect x="754" y="252" width="32" height="32" fill="#f8f4c8" /><rect x="754" y="252" width="32" height="1" fill="#000" /><rect x="754" y="283" width="32" height="1" fill="#000" /><rect x="754" y="252" width="1" height="32" fill="#000" /><rect x="785" y="252" width="1" height="32" fill="#000" /><circle cx="776" cy="262" r="5.8" fill="none" stroke="#000" stroke-width="1.1"/><rect x="775" y="258" width="2" height="5" fill="#000" /><rect x="775" y="264" width="2" height="2" fill="#000" /><rect x="761" y="275" width="3" height="3" fill="#000" /><circle cx="768.5" cy="276.5" r="3" fill="none" stroke="#000"/><path d="M772 275 L775 275 L775 273 L779 276.5 L775 280 L775 278 L772 278 Z" fill="#000"/><rect x="877" y="303" width="16" height="16" fill="#1e6e1e" /><rect x="878" y="304" width="14" height="14" fill="#fbf8dc" /><path d="M882.0 305.5 L888.0 305.5 L890.5 308.0 L890.5 314.0 L888.0 316.5 L882.0 316.5 L879.5 314.0 L879.5 308.0 Z" fill="#fff" stroke="#000" stroke-width="1"/><path d="M882.8 307 L887.2 307 L889 308.8 L889 313.2 L887.2 315 L882.8 315 L881 313.2 L881 308.8 Z" fill="#f01010"/><rect x="929" y="95" width="51" height="15" fill="#fff" /><rect x="929" y="95" width="51" height="1" fill="#000" /><rect x="929" y="109" width="51" height="1" fill="#000" /><rect x="929" y="95" width="1" height="15" fill="#000" /><rect x="979" y="95" width="1" height="15" fill="#000" /><text x="931" y="106" font-family="Liberation Sans" font-size="11" fill="#000" font-weight="normal" text-anchor="start" textLength="46" lengthAdjust="spacingAndGlyphs" >Channel 2</text><rect x="929" y="110" width="32" height="16" fill="#d818d8" /><rect x="931" y="112" width="28" height="12" fill="#f8c8f8" /><rect x="932" y="113" width="26" height="10" fill="#d818d8" /><rect x="933" y="114" width="24" height="8" fill="#fff" /><rect x="952" y="114" width="5" height="8" fill="#f0c0f0" /><rect x="938" y="115" width="6" height="1" fill="#d818d8" /><rect x="938" y="117" width="6" height="1" fill="#d818d8" /><rect x="938" y="115" width="1" height="3" fill="#d818d8" /><rect x="943" y="115" width="1" height="3" fill="#d818d8" /><rect x="945" y="115" width="4" height="1" fill="#d818d8" /><rect x="937" y="119" width="4" height="2" fill="#d818d8" /><rect x="943" y="118" width="5" height="3" fill="#d818d8" /><rect x="950" y="118" width="3" height="1" fill="#d818d8" /><rect x="950" y="120" width="3" height="1" fill="#d818d8" /><rect x="950" y="118" width="1" height="3" fill="#d818d8" /><rect x="952" y="118" width="1" height="3" fill="#d818d8" /><path d="M955 114.5 L959 118 L955 121.5 Z" fill="#000"/><rect x="930" y="134" width="51" height="15" fill="#fff" /><rect x="930" y="134" width="51" height="1" fill="#000" /><rect x="930" y="148" width="51" height="1" fill="#000" /><rect x="930" y="134" width="1" height="15" fill="#000" /><rect x="980" y="134" width="1" height="15" fill="#000" /><text x="932" y="145" font-family="Liberation Sans" font-size="11" fill="#000" font-weight="normal" text-anchor="start" textLength="46" lengthAdjust="spacingAndGlyphs" >Channel 1</text><rect x="930" y="149" width="32" height="16" fill="#d818d8" /><rect x="932" y="151" width="28" height="12" fill="#f8c8f8" /><rect x="933" y="152" width="26" height="10" fill="#d818d8" /><rect x="934" y="153" width="24" height="8" fill="#fff" /><rect x="953" y="153" width="5" height="8" fill="#f0c0f0" /><rect x="939" y="154" width="6" height="1" fill="#d818d8" /><rect x="939" y="156" width="6" height="1" fill="#d818d8" /><rect x="939" y="154" width="1" height="3" fill="#d818d8" /><rect x="944" y="154" width="1" height="3" fill="#d818d8" /><rect x="946" y="154" width="4" height="1" fill="#d818d8" /><rect x="938" y="158" width="4" height="2" fill="#d818d8" /><rect x="944" y="157" width="5" height="3" fill="#d818d8" /><rect x="951" y="157" width="3" height="1" fill="#d818d8" /><rect x="951" y="159" width="3" height="1" fill="#d818d8" /><rect x="951" y="157" width="1" height="3" fill="#d818d8" /><rect x="953" y="157" width="1" height="3" fill="#d818d8" /><path d="M956 153.5 L960 157 L956 160.5 Z" fill="#000"/><rect x="954" y="250" width="24" height="15" fill="#fff" /><rect x="954" y="250" width="24" height="1" fill="#000" /><rect x="954" y="264" width="24" height="1" fill="#000" /><rect x="954" y="250" width="1" height="15" fill="#000" /><rect x="977" y="250" width="1" height="15" fill="#000" /><text x="956" y="261" font-family="Liberation Sans" font-size="11" fill="#000" font-weight="normal" text-anchor="start" textLength="20" lengthAdjust="spacingAndGlyphs" >stop</text><rect x="954" y="265" width="32" height="16" fill="#107410" /><rect x="956" y="267" width="28" height="12" fill="#98e898" /><rect x="957" y="268" width="26" height="10" fill="#107410" /><rect x="958" y="269" width="24" height="8" fill="#fff" /><rect x="976" y="269" width="6" height="8" fill="#b0ccb0" /><rect x="964" y="270" width="6" height="2" fill="#107410" /><rect x="966" y="272" width="2" height="4" fill="#107410" /><rect x="972" y="270" width="2" height="6" fill="#107410" /><rect x="974" y="270" width="4" height="2" fill="#107410" /><rect x="974" y="273" width="3" height="1" fill="#107410" /><path d="M981 270 L984.5 273 L981 276 Z" fill="#000"/><rect x="930" y="418" width="54" height="15" fill="#fff" /><rect x="930" y="418" width="54" height="1" fill="#000" /><rect x="930" y="432" width="54" height="1" fill="#000" /><rect x="930" y="418" width="1" height="15" fill="#000" /><rect x="983" y="418" width="1" height="15" fill="#000" /><text x="932" y="429" font-family="Liberation Sans" font-size="11" fill="#000" font-weight="normal" text-anchor="start" textLength="50" lengthAdjust="spacingAndGlyphs" >Frequency</text><rect x="930" y="433" width="31" height="16" fill="#f0a040" /><rect x="931" y="434" width="29" height="14" fill="#fff8f0" /><text x="938" y="445" font-family="Liberation Sans" font-size="9" fill="#f07000" font-weight="bold" text-anchor="start" textLength="17" lengthAdjust="spacingAndGlyphs" >DBL</text><rect x="956" y="436" width="1" height="10" fill="#e08020" /><rect x="954" y="436" width="2" height="1" fill="#e08020" /><rect x="954" y="445" width="2" height="1" fill="#e08020" /><path d="M933 437 L937 441 L933 445 Z" fill="#000"/><rect x="22" y="323" width="58" height="16" fill="#f030f0" /><rect x="25" y="325" width="53" height="12" fill="#fff" /><text x="26" y="335" font-family="Liberation Sans" font-size="11" fill="#000" font-weight="normal" text-anchor="start" textLength="49" lengthAdjust="spacingAndGlyphs" >Start Scan</text><rect x="22" y="359" width="32" height="32" fill="#f8f4c8" /><rect x="22" y="359" width="32" height="1" fill="#000" /><rect x="22" y="390" width="32" height="1" fill="#000" /><rect x="22" y="359" width="1" height="32" fill="#000" /><rect x="53" y="359" width="1" height="32" fill="#000" /><circle cx="44" cy="369" r="5.8" fill="none" stroke="#000" stroke-width="1.1"/><rect x="43" y="365" width="2" height="5" fill="#000" /><rect x="43" y="371" width="2" height="2" fill="#000" /><path d="M27.5 384.5 L36.5 375.5 M27.5 375.5 L36.5 384.5" stroke="#000" stroke-width="1" shape-rendering="crispEdges"/><rect x="31" y="374" width="2" height="12" fill="#000" /><rect x="26" y="379" width="12" height="2" fill="#000" /><rect x="30" y="378" width="4" height="4" fill="#f8f4c8" /><rect x="31" y="379" width="2" height="2" fill="#000" /><rect x="22" y="411" width="13" height="17" fill="#1a1ab0" /><rect x="24" y="413" width="9" height="13" fill="#fff" /><text x="28.5" y="424" font-family="Liberation Sans" font-size="11" fill="#000" font-weight="normal" text-anchor="middle" >0</text><rect x="215" y="430" width="32" height="32" fill="#f8f4c8" /><rect x="215" y="430" width="32" height="1" fill="#000" /><rect x="215" y="461" width="32" height="1" fill="#000" /><rect x="215" y="430" width="1" height="32" fill="#000" /><rect x="246" y="430" width="1" height="32" fill="#000" /><circle cx="237" cy="440" r="5.8" fill="none" stroke="#000" stroke-width="1.1"/><rect x="236" y="436" width="2" height="5" fill="#000" /><rect x="236" y="442" width="2" height="2" fill="#000" /><rect x="223" y="450" width="8" height="1" fill="#000" /><rect x="223" y="458" width="8" height="1" fill="#000" /><rect x="224" y="457" width="6" height="1" fill="#000" /><path d="M224.5 451 L227 454.5 L229.5 451 M224.5 457 L227 454.5 L229.5 457" stroke="#000" stroke-width="1.1" fill="none"/><rect x="232" y="457" width="2" height="2" fill="#000" /><rect x="235" y="457" width="2" height="2" fill="#000" /><rect x="238" y="457" width="2" height="2" fill="#000" /><rect x="22" y="462" width="85" height="15" fill="#fff" /><rect x="22" y="462" width="85" height="1" fill="#000" /><rect x="22" y="476" width="85" height="1" fill="#000" /><rect x="22" y="462" width="1" height="15" fill="#000" /><rect x="106" y="462" width="1" height="15" fill="#000" /><text x="24" y="473" font-family="Liberation Sans" font-size="11" fill="#000" font-weight="normal" text-anchor="start" textLength="80" lengthAdjust="spacingAndGlyphs" >dup VISA session</text><rect x="22" y="477" width="32" height="16" fill="#6a0a6a" /><rect x="24" y="479" width="28" height="12" fill="#f0c8f0" /><rect x="25" y="480" width="26" height="10" fill="#6a0a6a" /><rect x="26" y="481" width="24" height="8" fill="#fff" /><rect x="44" y="480" width="6" height="10" fill="#d8a8d8" /><text x="37" y="489" font-family="Liberation Mono" font-size="10" fill="#5a0a5a" font-weight="normal" text-anchor="middle" textLength="15" lengthAdjust="spacingAndGlyphs" >I/O</text><path d="M48 481 L51.5 485 L48 489 Z" fill="#000"/><rect x="215" y="534" width="27" height="15" fill="#fff" /><rect x="215" y="534" width="27" height="1" fill="#000" /><rect x="215" y="548" width="27" height="1" fill="#000" /><rect x="215" y="534" width="1" height="15" fill="#000" /><rect x="241" y="534" width="1" height="15" fill="#000" /><text x="217" y="545" font-family="Liberation Sans" font-size="11" fill="#000" font-weight="normal" text-anchor="start" textLength="23" lengthAdjust="spacingAndGlyphs" >From</text><rect x="215" y="549" width="32" height="16" fill="#1c1cb4" /><rect x="217" y="551" width="28" height="12" fill="#c0c8ff" /><rect x="218" y="552" width="26" height="10" fill="#1c1cb4" /><rect x="219" y="553" width="24" height="8" fill="#fff" /><rect x="237" y="552" width="6" height="10" fill="#9898f0" /><text x="223" y="561" font-family="Liberation Serif" font-size="10" fill="#1010a8" font-weight="bold" text-anchor="start" textLength="15" lengthAdjust="spacingAndGlyphs" >I16</text><path d="M241 553.5 L245 557 L241 560.5 Z" fill="#000"/><rect x="215" y="569" width="13" height="15" fill="#fff" /><rect x="215" y="569" width="13" height="1" fill="#000" /><rect x="215" y="583" width="13" height="1" fill="#000" /><rect x="215" y="569" width="1" height="15" fill="#000" /><rect x="227" y="569" width="1" height="15" fill="#000" /><text x="217" y="580" font-family="Liberation Sans" font-size="11" fill="#000" font-weight="normal" text-anchor="start" textLength="9" lengthAdjust="spacingAndGlyphs" >to</text><rect x="215" y="584" width="32" height="16" fill="#1c1cb4" /><rect x="217" y="586" width="28" height="12" fill="#c0c8ff" /><rect x="218" y="587" width="26" height="10" fill="#1c1cb4" /><rect x="219" y="588" width="24" height="8" fill="#fff" /><rect x="237" y="587" width="6" height="10" fill="#9898f0" /><text x="223" y="596" font-family="Liberation Serif" font-size="10" fill="#1010a8" font-weight="bold" text-anchor="start" textLength="15" lengthAdjust="spacingAndGlyphs" >I16</text><path d="M241 588.5 L245 592 L241 595.5 Z" fill="#000"/><rect x="215" y="602" width="31" height="15" fill="#fff" /><rect x="215" y="602" width="31" height="1" fill="#000" /><rect x="215" y="616" width="31" height="1" fill="#000" /><rect x="215" y="602" width="1" height="15" fill="#000" /><rect x="245" y="602" width="1" height="15" fill="#000" /><text x="217" y="613" font-family="Liberation Sans" font-size="11" fill="#000" font-weight="normal" text-anchor="start" textLength="27" lengthAdjust="spacingAndGlyphs" >Width</text><rect x="215" y="617" width="32" height="16" fill="#1c1cb4" /><rect x="217" y="619" width="28" height="12" fill="#c0c8ff" /><rect x="218" y="620" width="26" height="10" fill="#1c1cb4" /><rect x="219" y="621" width="24" height="8" fill="#fff" /><rect x="237" y="620" width="6" height="10" fill="#9898f0" /><text x="223" y="629" font-family="Liberation Serif" font-size="10" fill="#1010a8" font-weight="bold" text-anchor="start" textLength="15" lengthAdjust="spacingAndGlyphs" >I16</text><path d="M241 621.5 L245 625 L241 628.5 Z" fill="#000"/><rect x="430" y="540" width="27" height="15" fill="#fff" /><rect x="430" y="540" width="27" height="1" fill="#000" /><rect x="430" y="554" width="27" height="1" fill="#000" /><rect x="430" y="540" width="1" height="15" fill="#000" /><rect x="456" y="540" width="1" height="15" fill="#000" /><text x="432" y="551" font-family="Liberation Sans" font-size="11" fill="#000" font-weight="normal" text-anchor="start" textLength="24" lengthAdjust="spacingAndGlyphs" >steps</text><rect x="395" y="552" width="32" height="32" fill="#fff" /><rect x="395" y="552" width="32" height="1" fill="#000" /><rect x="395" y="583" width="32" height="1" fill="#000" /><rect x="395" y="552" width="1" height="32" fill="#000" /><rect x="426" y="552" width="1" height="32" fill="#000" /><text x="398" y="564" font-family="Liberation Sans" font-size="11" fill="#000" font-weight="normal" text-anchor="start" textLength="27" lengthAdjust="spacingAndGlyphs" >Calcu</text><text x="397" y="578" font-family="Liberation Sans" font-size="11" fill="#000" font-weight="normal" text-anchor="start" textLength="27" lengthAdjust="spacingAndGlyphs" >steps</text><path d="M396 554 L399 557 L396 560 Z M396 565 L399 568 L396 571 Z M397 583 L399 580 L401 583 Z" fill="#606070"/><rect x="569" y="482" width="32" height="32" fill="#fff" /><rect x="569" y="482" width="32" height="1" fill="#000" /><rect x="569" y="513" width="32" height="1" fill="#000" /><rect x="569" y="482" width="1" height="32" fill="#000" /><rect x="600" y="482" width="1" height="32" fill="#000" /><text x="572" y="495" font-family="Liberation Sans" font-size="11" fill="#000" font-weight="normal" text-anchor="start" textLength="25" lengthAdjust="spacingAndGlyphs" >Scan</text><path d="M570 491 L573 494 L570 497 Z M570 500 L573 503 L570 506 Z" fill="#606070"/><rect x="597" y="417" width="25" height="15" fill="#fff" /><rect x="597" y="417" width="25" height="1" fill="#000" /><rect x="597" y="431" width="25" height="1" fill="#000" /><rect x="597" y="417" width="1" height="15" fill="#000" /><rect x="621" y="417" width="1" height="15" fill="#000" /><text x="599" y="428" font-family="Liberation Sans" font-size="11" fill="#000" font-weight="normal" text-anchor="start" textLength="21" lengthAdjust="spacingAndGlyphs" >Time</text><rect x="597" y="432" width="32" height="16" fill="#3a3ac0" /><rect x="598" y="433" width="30" height="14" fill="#fff" /><rect x="600" y="434" width="6" height="12" fill="#a0a0f0" /><path d="M601 437 L605 440.5 L601 444 Z" fill="#000"/><text x="608" y="444" font-family="Liberation Serif" font-size="10" fill="#1818a8" font-weight="bold" text-anchor="start" textLength="15" lengthAdjust="spacingAndGlyphs" >I16</text><rect x="624" y="435" width="1" height="10" fill="#1818a8" /><rect x="622" y="435" width="2" height="1" fill="#1818a8" /><rect x="622" y="444" width="2" height="1" fill="#1818a8" /><path d="M503.5 573.5 L523.5 583.5 L503.5 593.5 Z" fill="#f8f4c8" stroke="#000" stroke-width="1"/><path d="M508 580 L514 586 M514 580 L508 586" stroke="#000" stroke-width="1.6"/><path d="M536.5 578.5 L556.5 588.5 L536.5 598.5 Z" fill="#f8f4c8" stroke="#000" stroke-width="1"/><path d="M541 588.5 L547 588.5 M544 585.5 L544 591.5" stroke="#000" stroke-width="1.6"/><rect x="787" y="664" width="64" height="15" fill="#fff" /><rect x="787" y="664" width="64" height="1" fill="#000" /><rect x="787" y="678" width="64" height="1" fill="#000" /><rect x="787" y="664" width="1" height="15" fill="#000" /><rect x="850" y="664" width="1" height="15" fill="#000" /><text x="789" y="675" font-family="Liberation Sans" font-size="11" fill="#000" font-weight="normal" text-anchor="start" textLength="60" lengthAdjust="spacingAndGlyphs" >End Program</text><rect x="787" y="680" width="32" height="16" fill="#107410" /><rect x="789" y="682" width="28" height="12" fill="#98e898" /><rect x="790" y="683" width="26" height="10" fill="#107410" /><rect x="791" y="684" width="24" height="8" fill="#fff" /><rect x="809" y="684" width="6" height="8" fill="#b0ccb0" /><rect x="797" y="685" width="6" height="2" fill="#107410" /><rect x="799" y="687" width="2" height="4" fill="#107410" /><rect x="805" y="685" width="2" height="6" fill="#107410" /><rect x="807" y="685" width="4" height="2" fill="#107410" /><rect x="807" y="688" width="3" height="1" fill="#107410" /><path d="M814 685 L817.5 688 L814 691 Z" fill="#000"/><rect x="876" y="682" width="16" height="16" fill="#1e6e1e" /><rect x="877" y="683" width="14" height="14" fill="#fbf8dc" /><path d="M881.0 684.5 L887.0 684.5 L889.5 687.0 L889.5 693.0 L887.0 695.5 L881.0 695.5 L878.5 693.0 L878.5 687.0 Z" fill="#fff" stroke="#000" stroke-width="1"/><path d="M881.8 686 L886.2 686 L888 687.8 L888 692.2 L886.2 694 L881.8 694 L880 692.2 L880 687.8 Z" fill="#f01010"/>
</g>
</svg>
</body></html>
